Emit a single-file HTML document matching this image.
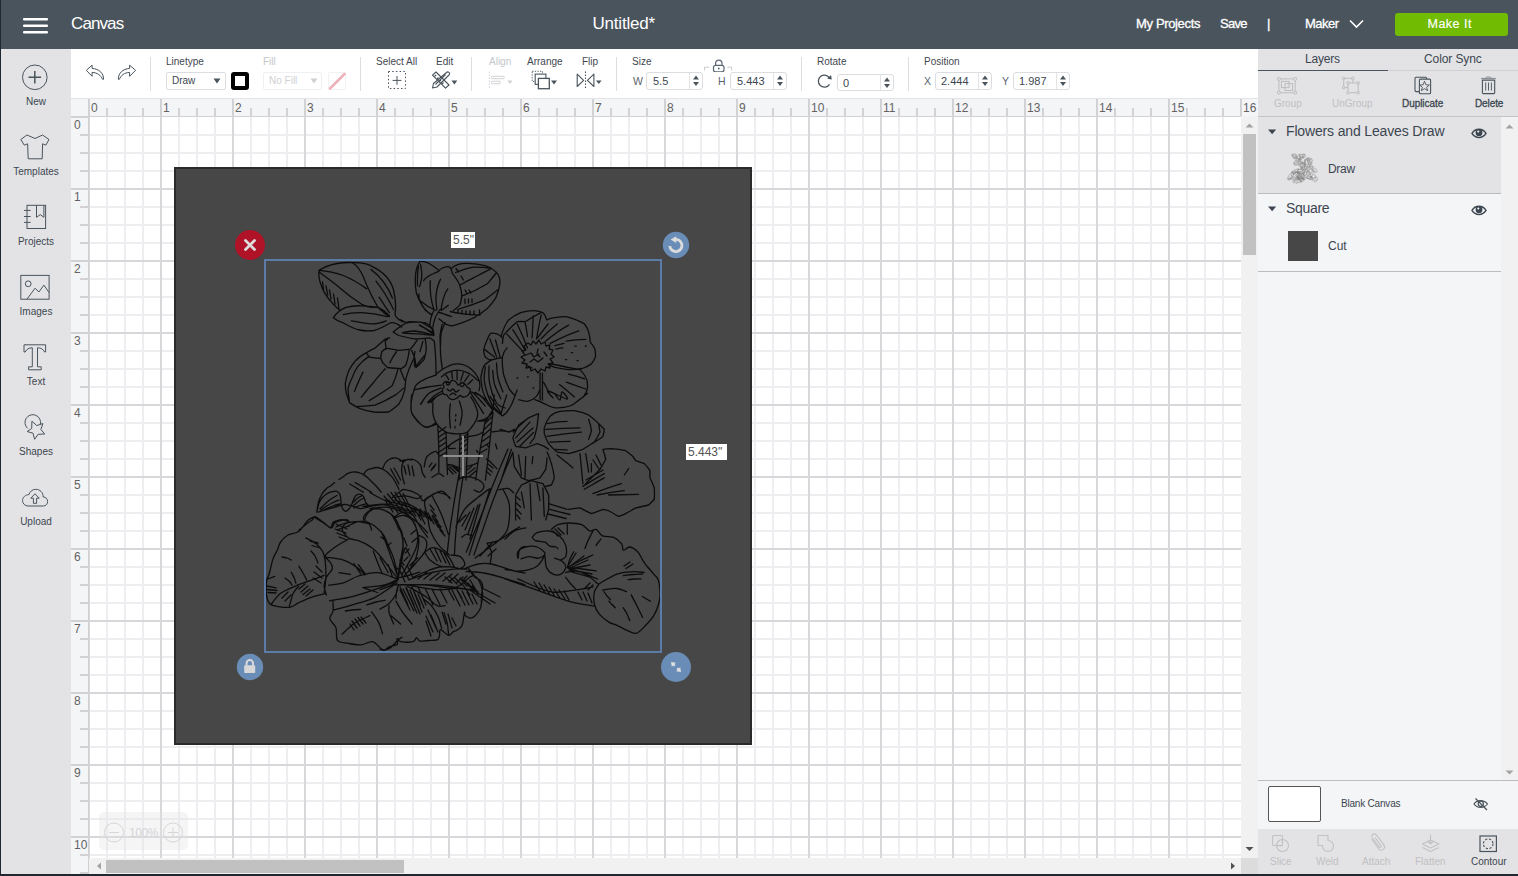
<!DOCTYPE html>
<html><head><meta charset="utf-8">
<style>
*{box-sizing:border-box;margin:0;padding:0}
html,body{width:1518px;height:876px;overflow:hidden;background:#fff;font-family:"Liberation Sans",sans-serif;position:relative}
.abs{position:absolute}
.t{position:absolute;white-space:nowrap;line-height:1}
#hdr{position:absolute;left:0;top:0;width:1518px;height:49px;background:#4a545c}
.ht{position:absolute;color:#fff;white-space:nowrap;line-height:1}
#side{position:absolute;left:1px;top:49px;width:70px;height:825px;background:#e3e3e5}
.sl{position:absolute;left:0;width:70px;text-align:center;font-size:10px;color:#3c4650;line-height:1}
.lbl{position:absolute;font-size:10px;color:#3f4750;white-space:nowrap;line-height:1}
.dis{color:#c3c7cb}
.sep{position:absolute;top:57px;width:1px;height:34px;background:#dedee0}
.inp{position:absolute;height:17px;border:1px solid #dcdde0;border-radius:3px;background:#fff}
.iv{position:absolute;font-size:11px;color:#3c4650;line-height:1;white-space:nowrap}
#canvas{position:absolute;left:71px;top:99px;width:1170px;height:759px;overflow:hidden}
.pt{position:absolute;color:#3c4650;white-space:nowrap;line-height:1}
</style></head><body>
<!-- HEADER -->
<div id="hdr">
  <svg class="abs" style="left:23px;top:17px" width="26" height="18"><g fill="#fff"><rect x="0" y="1" width="25" height="2.4" rx="1"/><rect x="0" y="7.5" width="25" height="2.4" rx="1"/><rect x="0" y="14" width="25" height="2.4" rx="1"/></g></svg>
  <div class="ht" style="left:71px;top:14.5px;font-size:17px;letter-spacing:-0.9px">Canvas</div>
  <div class="ht" style="left:592.5px;top:14.5px;font-size:17px;letter-spacing:-0.2px">Untitled*</div>
  <div class="ht" style="left:1136px;top:17px;font-size:13px;letter-spacing:-0.35px;-webkit-text-stroke:0.3px #fff">My Projects</div>
  <div class="ht" style="left:1220px;top:17px;font-size:13px;letter-spacing:-0.7px;-webkit-text-stroke:0.3px #fff">Save</div>
  <div class="ht" style="left:1267px;top:17px;font-size:13px;-webkit-text-stroke:0.35px #fff">|</div>
  <div class="ht" style="left:1305px;top:17px;font-size:13px;letter-spacing:-0.5px;-webkit-text-stroke:0.3px #fff">Maker</div>
  <svg class="abs" style="left:1349px;top:19px" width="15" height="10"><path d="M1 1.5L7.5 8L14 1.5" stroke="#fff" stroke-width="1.6" fill="none"/></svg>
  <div class="abs" style="left:1395px;top:13px;width:113px;height:23px;background:#71bb02;border-radius:3px"></div>
  <div class="ht" style="left:1427.5px;top:17.8px;font-size:12.5px;letter-spacing:0.5px;-webkit-text-stroke:0.15px #fff">Make It</div>
</div>
<div class="abs" style="left:0;top:0;width:1px;height:876px;background:#1f2730"></div>
<div class="abs" style="left:0;top:874px;width:1518px;height:2px;background:#1f2730"></div>

  <!-- LEFT SIDEBAR -->
  <div id="side">
    <svg class="abs" style="left:-1px;top:-49px" width="71" height="600" fill="none" stroke="#4a545c" stroke-width="1">
      <circle cx="34.8" cy="77.3" r="12.3"/>
      <path d="M34.8 71V83.6M28.5 77.3H41.1" stroke-width="1.5"/>
      <path d="M27 135L35 138.5L42.5 135L49 139.5L45.8 145.2L42.6 143.8L42.2 158.8H28.2L27.6 143.8L24.3 145.2L20.8 139.5Z" stroke-linejoin="round"/>
      <rect x="27" y="205.3" width="18.6" height="23.2"/>
      <path d="M36.5 205.3V217.3L40.2 214.6L43.9 217.3V205.3"/>
      <path d="M24 210.4H30.6M24 216.5H30.6M24 222.4H30.6"/>
      <rect x="20.8" y="275.4" width="28.3" height="23.8"/>
      <circle cx="28.2" cy="283.8" r="2.9"/>
      <path d="M26.9 299.2L35.1 288.2L38.9 292L43.9 285.1L49.1 292.6"/>
      <path d="M24 344.8H45.6V352L44.6 352C43 349 41 347.8 37.5 347.8V366.8H41.2V369.8H28.6V366.8H32.3V347.8C28.8 347.8 26.8 349 25.2 352L24 352Z" stroke-linejoin="round"/>
      <path d="M27.6 428.3A7.8 7.8 0 1 1 40.4 424.2"/>
      <path d="M31.9 421.2L36.8 425.6L42.9 423.5L40.9 429.5L44.7 434L38.1 434.3L34.6 439.3L33 433.2L27.1 431.5L31.7 428.5Z" stroke-linejoin="round"/>
      <path d="M28 506H43.5C46 506 47.6 504 47.6 501.5C47.6 498.8 45.6 497 43.2 497C43.2 492.5 40 489.3 35.8 489.3C32.3 489.3 29.8 491.6 29 494.6C25.5 494.6 22.5 497.3 22.5 500.5C22.5 503.5 25 506 28 506Z"/>
      <path d="M35 493.8L30.8 498.2H33.4V503.3H36.6V498.2H39.2Z" stroke-linejoin="round"/>
    </svg>
    <div class="sl" style="top:48px">New</div>
    <div class="sl" style="top:118px">Templates</div>
    <div class="sl" style="top:188px">Projects</div>
    <div class="sl" style="top:258px">Images</div>
    <div class="sl" style="top:328px">Text</div>
    <div class="sl" style="top:398px">Shapes</div>
    <div class="sl" style="top:468px">Upload</div>
  </div>


<!-- TOOLBAR -->
<div class="abs" style="left:71px;top:49px;width:1187px;height:50px;background:#fff"></div>
<div class="abs" style="left:71px;top:98px;width:1187px;height:1px;background:#e4e4e6"></div>
<svg class="abs" style="left:80px;top:60px" width="62" height="24" fill="none" stroke="#4a545c" stroke-width="1" stroke-linejoin="round">
  <path d="M6.3 10.3L12.1 5.2V8.4C19 9 23.6 13 23.6 19.3C23.3 19.6 22.7 19.6 22.4 19.2C21 15.5 17.5 12.6 12.1 12.4V16.3Z"/>
  <path d="M55.6 10.3L49.6 5.2V8.4C42.8 9 38.3 13 38.3 19.3C38.6 19.6 39.2 19.6 39.5 19.2C40.9 15.5 44.3 12.6 49.6 12.4V16.3Z"/>
</svg>
<div class="sep" style="left:150px"></div>
<div class="lbl" style="left:166px;top:57px">Linetype</div>
<div class="inp" style="left:166px;top:72px;width:60px;height:18px;border-radius:2px"></div>
<div class="iv" style="left:172px;top:76px;font-size:10px">Draw</div>
<svg class="abs" style="left:213px;top:78px" width="8" height="6"><path d="M0.5 0.5H7.5L4 5.5Z" fill="#4a545c"/></svg>
<div class="abs" style="left:231px;top:72px;width:18px;height:18px;border:4px solid #000;border-radius:3px;background:#fff"></div>
<div class="lbl dis" style="left:263px;top:57px">Fill</div>
<div class="inp" style="left:263px;top:72px;width:59px;height:18px;border-color:#f0f0f2;border-radius:2px"></div>
<div class="iv" style="left:269px;top:76px;font-size:10px;color:#cfd1d4">No Fill</div>
<svg class="abs" style="left:310px;top:78px" width="8" height="6"><path d="M0.5 0.5H7.5L4 5.5Z" fill="#cfd1d4"/></svg>
<div class="inp" style="left:328px;top:72px;width:18px;height:18px;border-color:#f2f2f4;border-radius:2px"></div>
<svg class="abs" style="left:328px;top:72px" width="18" height="18"><path d="M2 16.5L16.5 2" stroke="#efb2ba" stroke-width="2.6" stroke-linecap="round"/></svg>
<div class="sep" style="left:360px"></div>
<div class="lbl" style="left:376px;top:57px">Select All</div>
<svg class="abs" style="left:386px;top:70px" width="22" height="21" fill="none" stroke="#4a545c">
  <rect x="2.5" y="1.5" width="17" height="17" stroke-dasharray="1.5 2.2" stroke-width="1"/>
  <path d="M11 6V14.8M6.6 10.4H15.4" stroke-width="1"/>
</svg>
<div class="lbl" style="left:436px;top:57px">Edit</div>
<svg class="abs" style="left:430px;top:70px" width="30" height="20" fill="none" stroke="#4a545c" stroke-width="1.1" stroke-linejoin="round">
  <path d="M2.5 5.2L6 2L19 15L15.5 18.2Z"/>
  <path d="M4.5 6.5L6.2 4.8M7 9L8.5 7.5M9.5 11.5L11 10M12 14L13.5 12.5"/>
  <path d="M16.5 2.5C17.5 1.5 19 1.8 19.5 3C19.8 3.8 19.5 4.5 19 5L7 17L2.5 18L3.5 13.5Z"/>
  <path d="M5.5 14.5L15.5 4.5"/>
  <path d="M21.5 10.5H27.3L24.4 14.4Z" fill="#4a545c" stroke="none"/>
</svg>
<div class="sep" style="left:471px"></div>
<div class="lbl dis" style="left:489px;top:57px">Align</div>
<svg class="abs" style="left:486px;top:70px" width="30" height="20" fill="none" stroke="#cfd1d4" stroke-width="1">
  <path d="M3.4 1.5V18.7" stroke-dasharray="1.5 1.5"/>
  <rect x="5.6" y="6.3" width="12.4" height="2.4" rx="0.5"/>
  <rect x="5.6" y="11.2" width="8.5" height="2.6" rx="0.5"/>
  <path d="M21.4 10.6H26.5L24 14Z" fill="#cfd1d4" stroke="none"/>
</svg>
<div class="lbl" style="left:527px;top:57px">Arrange</div>
<svg class="abs" style="left:530px;top:70px" width="30" height="20" fill="none" stroke="#4a545c" stroke-width="1.1">
  <rect x="2.2" y="1.3" width="10.3" height="10.1" stroke-dasharray="1.3 1.3" stroke-width="0.9"/>
  <rect x="5.2" y="4.1" width="10.7" height="10.3" fill="#fff"/>
  <rect x="8.4" y="8.4" width="10.9" height="10.3" fill="#fff" stroke-width="1.3"/>
  <path d="M21 10.4H27L24 14.4Z" fill="#4a545c" stroke="none"/>
</svg>
<div class="lbl" style="left:582px;top:57px">Flip</div>
<svg class="abs" style="left:575px;top:70px" width="30" height="20" fill="none" stroke="#4a545c" stroke-width="1.1" stroke-linejoin="round">
  <path d="M2.2 4.1L8.6 10.3L2.2 16.5Z"/>
  <path d="M10.5 1.5V18.7" stroke-dasharray="1.6 1.4"/>
  <path d="M18.9 4.1L12.4 10.3L18.9 16.5Z"/>
  <path d="M21 10.4H26.6L23.8 14Z" fill="#4a545c" stroke="none"/>
</svg>
<div class="sep" style="left:616px"></div>
<div class="lbl" style="left:632px;top:57px">Size</div>
<div class="lbl" style="left:633px;top:76px;color:#5a6470;font-size:10.5px">W</div>
<div class="inp" style="left:646px;top:72px;width:57px;height:18px"></div>
<div class="abs" style="left:689px;top:73px;width:1px;height:16px;background:#e4e4e6"></div>
<div class="iv" style="left:653px;top:76px">5.5</div>
<svg class="abs" style="left:692px;top:74px" width="8" height="14"><path d="M1 5.4L4 1.5L7 5.4ZM1 8L4 12L7 8Z" fill="#4a545c"/></svg>
<svg class="abs" style="left:703px;top:58px" width="30" height="14" fill="none" stroke="#5a6470" stroke-width="1">
  <path d="M1.5 12.5V9.2H6.3M24.3 9.2H28.6V12.5" stroke="#c8ccd0"/>
  <rect x="10.5" y="7.3" width="10.5" height="6.5" rx="2" stroke-width="1.2"/>
  <path d="M12.6 7.3V5.3A3.2 3.2 0 0 1 19 5.3V7.3" stroke-width="1.2"/>
  <circle cx="15.8" cy="10.5" r="0.9" fill="#5a6470" stroke="none"/>
</svg>
<div class="lbl" style="left:718px;top:76px;color:#5a6470;font-size:10.5px">H</div>
<div class="inp" style="left:730px;top:72px;width:57px;height:18px"></div>
<div class="abs" style="left:773px;top:73px;width:1px;height:16px;background:#e4e4e6"></div>
<div class="iv" style="left:737px;top:76px">5.443</div>
<svg class="abs" style="left:776px;top:74px" width="8" height="14"><path d="M1 5.4L4 1.5L7 5.4ZM1 8L4 12L7 8Z" fill="#4a545c"/></svg>
<div class="sep" style="left:801px"></div>
<div class="lbl" style="left:817px;top:57px">Rotate</div>
<svg class="abs" style="left:815px;top:73px" width="20" height="16" fill="none" stroke="#4a545c" stroke-width="1.3">
  <path d="M14.8 5.6A6 6 0 1 0 14.5 11.3"/>
  <path d="M12.2 5.8L16.8 6.4L16 2" fill="#4a545c" stroke="none"/>
</svg>
<div class="inp" style="left:837px;top:74px;width:57px;height:17px"></div>
<div class="abs" style="left:880px;top:75px;width:1px;height:15px;background:#e4e4e6"></div>
<div class="iv" style="left:843px;top:78px">0</div>
<svg class="abs" style="left:883px;top:76px" width="8" height="14"><path d="M1 5.4L4 1.5L7 5.4ZM1 8L4 12L7 8Z" fill="#4a545c"/></svg>
<div class="sep" style="left:908px"></div>
<div class="lbl" style="left:924px;top:57px">Position</div>
<div class="lbl" style="left:924px;top:76px;color:#5a6470;font-size:10.5px">X</div>
<div class="inp" style="left:935px;top:72px;width:57px;height:18px"></div>
<div class="abs" style="left:978px;top:73px;width:1px;height:16px;background:#e4e4e6"></div>
<div class="iv" style="left:941px;top:76px">2.444</div>
<svg class="abs" style="left:981px;top:74px" width="8" height="14"><path d="M1 5.4L4 1.5L7 5.4ZM1 8L4 12L7 8Z" fill="#4a545c"/></svg>
<div class="lbl" style="left:1002px;top:76px;color:#5a6470;font-size:10.5px">Y</div>
<div class="inp" style="left:1013px;top:72px;width:57px;height:18px"></div>
<div class="abs" style="left:1056px;top:73px;width:1px;height:16px;background:#e4e4e6"></div>
<div class="iv" style="left:1019px;top:76px">1.987</div>
<svg class="abs" style="left:1059px;top:74px" width="8" height="14"><path d="M1 5.4L4 1.5L7 5.4ZM1 8L4 12L7 8Z" fill="#4a545c"/></svg>

<!-- CANVAS -->
<div>
<svg class="abs" style="left:71px;top:99px" width="1187" height="775" shape-rendering="crispEdges" font-family="Liberation Sans">
<rect x="0" y="0" width="1187" height="775" fill="#fff"/>
<path d="M36 18V759M54 18V759M72 18V759M108 18V759M126 18V759M144 18V759M180 18V759M198 18V759M216 18V759M252 18V759M270 18V759M288 18V759M324 18V759M342 18V759M360 18V759M396 18V759M414 18V759M432 18V759M468 18V759M486 18V759M504 18V759M540 18V759M558 18V759M576 18V759M612 18V759M630 18V759M648 18V759M684 18V759M702 18V759M720 18V759M756 18V759M774 18V759M792 18V759M828 18V759M846 18V759M864 18V759M900 18V759M918 18V759M936 18V759M972 18V759M990 18V759M1008 18V759M1044 18V759M1062 18V759M1080 18V759M1116 18V759M1134 18V759M1152 18V759M18 36H1170M18 54H1170M18 72H1170M18 108H1170M18 126H1170M18 144H1170M18 180H1170M18 198H1170M18 216H1170M18 252H1170M18 270H1170M18 288H1170M18 324H1170M18 342H1170M18 360H1170M18 396H1170M18 414H1170M18 432H1170M18 468H1170M18 486H1170M18 504H1170M18 540H1170M18 558H1170M18 576H1170M18 612H1170M18 630H1170M18 648H1170M18 684H1170M18 702H1170M18 720H1170M18 756H1170" stroke="#eeeef0" stroke-width="2" fill="none"/>
<path d="M18 18V759M90 18V759M162 18V759M234 18V759M306 18V759M378 18V759M450 18V759M522 18V759M594 18V759M666 18V759M738 18V759M810 18V759M882 18V759M954 18V759M1026 18V759M1098 18V759M18 90H1170M18 162H1170M18 234H1170M18 306H1170M18 378H1170M18 450H1170M18 522H1170M18 594H1170M18 666H1170M18 738H1170" stroke="#d8d8da" stroke-width="2" fill="none"/>
<rect x="0" y="0" width="1187" height="17" fill="#f4f5f7"/>
<rect x="0" y="0" width="17" height="775" fill="#f4f5f7"/>
<path d="M18 0V18M90 0V18M162 0V18M234 0V18M306 0V18M378 0V18M450 0V18M522 0V18M594 0V18M666 0V18M738 0V18M810 0V18M882 0V18M954 0V18M1026 0V18M1098 0V18M1170 0V18M36 9V18M54 9V18M72 9V18M108 9V18M126 9V18M144 9V18M180 9V18M198 9V18M216 9V18M252 9V18M270 9V18M288 9V18M324 9V18M342 9V18M360 9V18M396 9V18M414 9V18M432 9V18M468 9V18M486 9V18M504 9V18M540 9V18M558 9V18M576 9V18M612 9V18M630 9V18M648 9V18M684 9V18M702 9V18M720 9V18M756 9V18M774 9V18M792 9V18M828 9V18M846 9V18M864 9V18M900 9V18M918 9V18M936 9V18M972 9V18M990 9V18M1008 9V18M1044 9V18M1062 9V18M1080 9V18M1116 9V18M1134 9V18M1152 9V18M0 18H18M0 90H18M0 162H18M0 234H18M0 306H18M0 378H18M0 450H18M0 522H18M0 594H18M0 666H18M0 738H18M9 36H18M9 54H18M9 72H18M9 108H18M9 126H18M9 144H18M9 180H18M9 198H18M9 216H18M9 252H18M9 270H18M9 288H18M9 324H18M9 342H18M9 360H18M9 396H18M9 414H18M9 432H18M9 468H18M9 486H18M9 504H18M9 540H18M9 558H18M9 576H18M9 612H18M9 630H18M9 648H18M9 684H18M9 702H18M9 720H18M9 756H18M9 774H18" stroke="#d2d2d4" stroke-width="1.5" fill="none"/>
<rect x="17" y="16.799999999999997" width="1170" height="1.3" fill="#d2d2d4"/>
<rect x="16.5" y="16" width="1.5" height="759" fill="#d0d0d2"/>
<text x="20" y="13" font-size="12" fill="#636363">0</text>
<text x="92" y="13" font-size="12" fill="#636363">1</text>
<text x="164" y="13" font-size="12" fill="#636363">2</text>
<text x="236" y="13" font-size="12" fill="#636363">3</text>
<text x="308" y="13" font-size="12" fill="#636363">4</text>
<text x="380" y="13" font-size="12" fill="#636363">5</text>
<text x="452" y="13" font-size="12" fill="#636363">6</text>
<text x="524" y="13" font-size="12" fill="#636363">7</text>
<text x="596" y="13" font-size="12" fill="#636363">8</text>
<text x="668" y="13" font-size="12" fill="#636363">9</text>
<text x="740" y="13" font-size="12" fill="#636363">10</text>
<text x="812" y="13" font-size="12" fill="#636363">11</text>
<text x="884" y="13" font-size="12" fill="#636363">12</text>
<text x="956" y="13" font-size="12" fill="#636363">13</text>
<text x="1028" y="13" font-size="12" fill="#636363">14</text>
<text x="1100" y="13" font-size="12" fill="#636363">15</text>
<text x="1172" y="13" font-size="12" fill="#636363">16</text>
<text x="3" y="30" font-size="12" fill="#636363">0</text>
<text x="3" y="102" font-size="12" fill="#636363">1</text>
<text x="3" y="174" font-size="12" fill="#636363">2</text>
<text x="3" y="246" font-size="12" fill="#636363">3</text>
<text x="3" y="318" font-size="12" fill="#636363">4</text>
<text x="3" y="390" font-size="12" fill="#636363">5</text>
<text x="3" y="462" font-size="12" fill="#636363">6</text>
<text x="3" y="534" font-size="12" fill="#636363">7</text>
<text x="3" y="606" font-size="12" fill="#636363">8</text>
<text x="3" y="678" font-size="12" fill="#636363">9</text>
<text x="3" y="750" font-size="12" fill="#636363">10</text>
</svg>
<div class="abs" style="left:1241px;top:116px;width:17px;height:742px;background:#f1f1f1"></div>
<div class="abs" style="left:1243px;top:134px;width:13px;height:121px;background:#c1c1c1"></div>
<svg class="abs" style="left:1241px;top:116px" width="17" height="742"><path d="M4.5 11.5H12.5L8.5 7.5Z" fill="#a3a3a3"/><path d="M4.5 731H12.5L8.5 735Z" fill="#505050"/></svg>
<div class="abs" style="left:89px;top:858px;width:1152px;height:16px;background:#f1f1f1"></div>
<div class="abs" style="left:106px;top:860px;width:298px;height:13px;background:#c1c1c1"></div>
<svg class="abs" style="left:89px;top:858px" width="1152" height="16"><path d="M12 4.5V11.5L8 8Z" fill="#a3a3a3"/><path d="M1142 4.5V11.5L1146 8Z" fill="#505050"/></svg>
<div class="abs" style="left:1241px;top:858px;width:17px;height:16px;background:#dcdcdc"></div>
</div>
<!-- OVERLAY: square + selection -->
<div class="abs" style="left:174px;top:167px;width:578px;height:578px;background:#474747;border:2px solid #2a2a2a"></div>
<svg class="abs" style="left:0;top:0" width="1518" height="876">
<path d="M319 270.4C330 263 345 262 353.4 262.7C362 262.5 368 264 371.9 266.3C384 272 391 280 393.5 290C396 300 396 308 395 314.6C396 318 399 320 402.8 321.8M319 270.4C318.5 276 319 280 320.6 283.8C323 291 326 296 329.8 300.2C333 304 336 307.5 340.1 310.5M319 272C326 277 333 282 341.1 288.9C348 295 355 300 361.7 304.3C367 307 372 307.5 377 307.4M319 270.4C327 271 335 272.5 343.2 275.5C352 279 360 284 366.8 288.9M352.4 262.7C358 266 361 271 363.7 277.6C366 284 369 290 371.9 296.1C374 300 376 304 378.1 307.4C382 311 385 314 389.4 316.6M370.9 269.4C380 276 388 287 392.5 298.2M376 281.2C383 290 389 300 393.5 309.5M379.1 297.1C383 303 386 308 389.4 312.6M322.5 282L323.6 290M326 286L327.7 295M329.5 290L331 299M333.5 294L335 304M337.5 298L339 309M333.4 317.7C337 312 342 309 346.2 307.4C351 306 356 305.5 361.7 305.9C367 306 373 306.5 378.1 307.4C382 309 386 312 389.4 315.6M333.4 317.7C336 320 340 322 343.2 322.8C349 326 354 329 359.6 330C364 331 369 331 374 330.5C380 329 385 326 390.4 322.8C394 322 398 324 401.7 327M343.2 314.6C349 313 355 312.5 361.7 312.6C370 313 379 314.5 387.4 316.6M351.4 320.8C358 322 365 323.5 371.9 323.9C377 324 382 322.5 386.3 320.8M420 261.2C417 266 415.5 272 415.4 277.6C415 283 415.5 288 416.4 293C418 298 420 302 422.6 306.4C425 310 428 312.5 430.8 314.6M420 261.2C423 261.5 426 262 428.8 263.2C432 265 436 268 439 270.4C441 268.5 444 267 446.2 266.8C448 266.5 449.5 267 450.3 267.8C451.5 269.5 452 271.5 452.4 273.5C455 277 458 281 459.6 284.8C461 289 462 293 461.7 296.1C461.5 300 460.8 303 459.6 305.4C457.5 307.5 455.5 309 453.4 310.5M420.5 264.2C421.5 269 422 274 421.6 278.6C421 282 420.3 284.5 419.5 286.9M418.5 266.3C417.5 272 417.2 279 417.5 285.8M423.6 280.7C426 277 430 275 433.9 273.5C435.5 272.5 437 272 439 271.4M419 294C418.8 296 419 298 419.5 300.2C421 303.5 423 307 425.7 310.5C427.5 312 429.5 313.5 431.9 314.6M430.3 280.7C430 286 430.2 291 430.8 296.1C431.5 301 432.5 305.5 433.9 309.5M440.6 279.1C438 284 436.5 290 436 296.1C435.8 301 436.2 305.5 437 309.5M447.8 288.9C445.5 292 444 295.5 443.2 299.2C442.2 303 441.5 306 441.1 309.5M419.5 300.2C424 304 430 308 436 310.5M448.3 305.4C446 307 443.5 309 441.1 310.5M439 312.5C443 313.5 447 315 451.4 316.6M451.4 268.4C454 266 457.5 264.5 461.7 263.7C466 263 472 263.5 477.1 264.2C482 265 486.5 266 490.4 267.8C494 270 497 272.5 498.6 275.5C500 279 500.3 282 499.7 284.8C499 289.5 497.5 294 495.6 298.2C493 302 490.5 305.5 487.3 308.4C483 312 478.5 315 474 317.7C470 319.5 466 321.5 461.7 322.8C458 324 454.5 325.5 451.4 325.9C449 325.5 447 324.8 445.2 323.9C443 322.5 441 320.5 439 318.7M491.4 268.4C485 267.5 478.5 267 471.9 267.3C466 268.5 460.5 270.5 455.5 272.5M491.4 268.4C486 271.5 480 274.5 474 277.6C469 280 464.5 282.5 460.6 284.8M496.6 272.5C494 276 490.5 280 487.3 283.8C479 289 470.5 293 461.7 296.1M497.6 290C493 293.5 488.5 297 484.3 300.2C475 304 466 307 457.5 309.5M450.3 311.5C454 312.5 458 313.2 461.7 313.6C468 314.3 474 314.8 480.1 315.1M456 268.5L458.5 272M461 276L463.5 280M465 290L467 293.5M469 290L471 293M465 299V303.5M468.5 299V303M472 299V302.5M458 310V313M462 310.5V314M466 311V314.5M470 311V315M474 311V314.5M479.5 310V313.5M433.9 310.5C432.5 313 431.5 316 430.8 318.7C430.3 320.5 430 322.5 429.8 324.9M440.1 309.5C438 312.5 436 315.5 434.9 318.7C434 321 433.3 324 432.9 326.9M445.2 322.8C443.5 326 442 329.5 441.1 333.1C440.7 337 440.5 341 440.6 345M400 319.7C402.5 321 405 322.2 407.2 322.8C409.5 322.5 411.5 322 413.4 321.8C417.5 321.8 421.5 322 425.7 322.8C428.5 324.5 431 326.5 432.9 329C433.5 331 433.8 333 433.9 335.1M419.5 324.9C424 327.5 429 331 432.9 334.1M403.1 333.1C413 333.5 422 334 431.9 335.1M501.3 335.4C503 330 505 325 508.1 320.5C512 317 516 314.5 520.7 312.6C526 311 531 310.5 536.6 310.8C539 311 541.5 312 543.5 313.1C545 315 546 317.5 546.9 320M502.4 343.4C502.5 340.5 503 338 503.5 335.4C508 330 512.5 325.5 517.2 321.7C520 321.3 522.5 321.5 525.2 321.7C530 318.5 535 315.5 540.1 313.1M507 334.2C512 340 518 346 523 351.4M512.7 329.7C517 336 521 343 525.2 350.2M517.2 324C521 332 524.5 340 527.5 348M525.2 322.8C526 327 527 332 527.5 336.5M533.2 316C533 323 532.5 330 532.1 337.7M541.2 314.8C539.5 322 538 330 536.6 338.8M546.9 320C549.5 318.5 552 318 554.9 317.7C558.5 317 562.5 316.5 566.3 316.6C570 317.5 574 318.8 577.7 320.5C580 321.5 582.5 322.5 584.6 324C587 327 588.5 330.5 589.2 334.2C589.8 337 590 339.5 590.3 342.2C592 344.5 594 346.5 594.9 349.1C595.5 352 595.6 354.5 595.4 357.1C594.5 359.5 593 362 591.4 363.9C588.5 366 585.5 367.5 582.3 368.5C578 369.3 573 369.7 568.6 369.6C564 369.2 559.5 368.5 554.9 367.4C552.5 366.5 550 365.3 548.1 363.9M537.8 337.7C541 333 544.5 328.5 548.1 324M541.2 338.8C546 333.5 551.5 328.5 557.2 324M545.8 341.1C553 335 560.5 329.5 568.6 325.1M550.3 343.4C559.5 338.5 569 334 578.9 330.8M554.9 345.7C558 344.8 561 344 564 343.4M566.3 341.1C572.5 340 579 339.5 585.7 339.4M556 349.1C558.3 348.5 560.5 348.2 562.9 347.9M575 346.2h1.2M585.2 346.2h1.2M571.5 352.7h1.2M565.5 359.6h1.2M577 360.7h1.2M517 378h0.8M527.5 377h0.8M533 388h0.8M528 343L531 345L533 341L536 344L539 340L541 344L545 342L546 346L550 345L549 349L553 350L551 354L554 357L550 359L553 363L549 364L550 368L546 367L545 371L541 369L538 373L535 369L531 371L530 367L526 368L527 364L522 363L525 360L521 357L525 355L522 351L526 350L524 346ZM526 355L531 353L534 357L539 354M530 362L534 359L538 362L543 358M538 349L537 354L540 357M544 352L547 356M528 366L532 368M507 347.9C504.5 350.5 503 353.5 502.4 357.1C502 363 502.5 368.5 503.5 374.2C505 379.5 507 384.5 509.2 389C511 391.5 513 393.8 515 395.9M548.1 363.9C551 364 554 364.5 557 365C565 367 573 368.5 580 369.6C583 372.5 585.5 376 586.9 379.9C587.5 383 587.6 386 587.4 389C586.5 392 585 394.5 583.4 397M568.6 374.2C574 375.5 579.5 377 584.6 378.8M566.3 382.2C572.5 384.5 579 386.8 585.7 389M559.5 384.5C564.5 388.5 569.5 392.5 574.3 397M543.5 382.2C545.5 385.5 547.5 389.5 549.2 393.6M540.1 373.1C540 382 540 391 540.1 400M542.4 373.1C542.5 382 542.5 391 542.4 400M483.6 350.2C484.5 346 485.8 342.5 487.6 338.8C488.5 336.5 489.5 334.5 491 333.1C493.5 333 495.8 333.5 497.8 334.2C499.5 335.3 501 336.5 502.4 337.7M483.6 350.2C483.8 352.5 484.3 355 485.3 357.1C486.8 358.5 488.3 359.4 489.8 359.9C493 359.7 496 359 499 358.2M489.8 338.8C492 345 494.5 351 496.7 357.1M495.5 340C497 345.5 498.5 351 500.1 357.1M484.1 349.1C487.5 351.5 491 354.5 494.4 357.1M366.4 352.7C362 355 358.5 357.5 355.5 360.7C352.5 364 350.5 367.5 348.7 370.9C347 375 346 379 345.3 383.5C345.3 387 345.7 390.5 346.4 393.8C347.5 397 348.5 400 349.8 402.9C353 405 356.5 407 360.1 408.6C364.5 410.3 369 411.3 373.8 412C378.5 412.3 383.5 412.3 388.7 412C392.5 409.5 396 407 398.9 404C401.5 400 403.5 395 404.6 390.3C405.3 386.5 405.6 382.5 405.8 378.9C406.8 375.5 408 372 409.2 368.7C410.7 365 412.5 361.5 413.8 358.4C414.3 356 414.7 353.5 414.9 351.5M369.2 356.1C365 359 361 362.5 357.8 366.4C355.3 370 353.5 374 352.1 377.8C350.5 381 349 384.5 348.1 388.1C348 392.5 348.5 396.5 349.3 400.6M357.8 406.3C363.5 406.5 369.5 406 375 405.2C382 402.5 389 399 395.5 394.9C398.5 392.5 401 390.5 403.5 388.1M363 372.1C360 378 357 385 354.4 391.5M385.2 368.7C381 373.5 376.5 378.5 372.7 383.5C368.5 388 365 392.5 361.3 397.2M397.8 369.8C396.5 375 394.5 380.5 392.1 385.8C385 391 377 396 369.2 400.6M400.1 368.7C401.5 372.5 403 376.5 404.6 380.1M366.4 352.7C367.5 354.5 368.3 356 369.2 357.2C373 357.8 377 358.2 380.7 358.4C381.5 360 382.2 361.5 382.9 363C384.5 364.5 386 366 387.5 367.5C392 368 396.5 368.5 401.2 368.7C402.8 367.8 404.5 366.5 405.8 365.2C406.8 362.5 407.5 360 408.1 357.2C408.5 355 408.9 352.5 409.2 350.4M366.4 352.7C369 351 372 349.5 375 348.1C378.5 345 382 342 385.2 339C386.8 338.5 388.3 338 389.8 337.8M380.7 358.4C381 356 381.3 353.5 381.8 351.5C383.2 350.3 384.8 349.2 386.4 348.1C390.5 349 394.5 349.8 398.9 350.4C402.5 350.2 406.5 349.8 410.3 349.2C412.8 346.5 415 343.5 417.2 340.1M386.4 349.2C385.8 346.5 385.3 344 385.2 341.3C386 340.5 386.8 339.7 387.5 339M396.6 351.5C394 355 391.5 359 389.8 363M411.5 350.4C412.8 353 414 355.5 414.9 358.4C415.5 361.5 415.8 364.5 416 367.5C419 365 421.8 362 424 359.5C425.2 356 426 352.5 426.3 349.2C426.2 345.5 425.8 342 425.2 339M422.9 341.3C422 344.5 421 348 420 351.5M393.2 332.1C395 330.5 397 329 398.9 327.6C402 325.5 405 323.5 408.1 321.8C412.5 321.5 417 321.8 421.8 322.4C425 324.5 429 326.5 432 328.7C432.6 331 433 333 433.2 335.5M393.2 332.1C395 333.5 397 334.5 398.9 335.5C404 337 409.5 338 414.9 339C420 338.8 425 338.3 429.7 337.8C431.3 338.8 433 340 434.3 341.3M402.4 332.7C406.5 331.8 410.5 331.2 414.9 331C421 331.8 427 333.2 433.2 335M419.5 325.3C424 327.5 428 329.8 432 332.1M434.3 341.3C434.8 346 435.2 350.5 435.5 355C435.8 361.5 436 368 436 374.4M442.3 324.1C441.2 327.8 440.5 331.5 440 335.5C440.2 342 440.4 348.5 440.6 355C441 359.5 441.7 364 442.3 368.7M544.3 427.8C545.5 423.5 547.5 419.5 550 416.4C553 413.5 556.5 412 560 411.4C565 410.8 569.5 410.5 574.3 410.7C579.5 411.8 584.5 413 588.6 415C591.5 417.2 594.5 419.5 597.1 422.1C599.5 424.5 602 427 604.3 429.3C604 431.8 603.6 434 602.9 436.4C600.3 438.5 597.3 440.3 594.3 442.1C590.5 444.5 586.8 447 582.9 449.3C578 451 573.3 452.5 568.6 453.6C564.8 453.2 561 452.7 557.1 452.1C554 449.5 551 446.5 548.6 443.6C546.8 440.5 545.3 437 544.3 433.6C544.2 431.5 544.2 429.5 544.3 427.8M588.6 419.3C590 423 591 427 591.4 430.7C590.8 433.5 589.8 436.5 588.6 439.3M598.6 423.6C599.2 426.5 599.7 429.3 600 432.1C598.5 435.5 596.5 439 594.3 442.1M547.1 423.6C553.5 422.3 560 421.5 567.1 421.4M545.7 429.3C557 428.5 568.5 428 580 427.9M547.1 436.4C558.5 434.5 570 433 581.4 432.1M550 442.1C556.5 441.8 563 441.5 570 441.4M554.3 449.3C558.5 449.5 562.8 449.8 567.1 450M602.9 449.3C605.8 448.8 608.5 448.6 611.4 448.6C616 449 621 449.7 625.7 450.7C628.3 452.5 630.7 454.5 632.9 456.4C633.8 458 634.7 459.4 635.7 460.7C638.8 461.7 641.5 462.5 644.3 463.6C646.5 465.8 648.4 468.3 650 470.7C650 473 650 475.5 650 477.9C651.5 481.3 653 484.5 654.3 487.9C654.5 491.7 654.5 495.5 654.3 499.3C652.5 501.3 650.5 503.3 648.6 505C644.3 506 640 507 635.7 507.9C632.3 509.8 629 511.8 625.7 513.6C623.3 514.6 621 515.5 618.6 516.4C615.3 514.5 612 512.6 608.6 510.7C606.8 510.2 604.8 509.8 602.9 509.3C599 510.8 595.3 512.3 591.4 513.6C587.5 511.7 583.8 509.8 580 507.9C576.2 508.3 572.4 508.8 568.6 509.3M592.9 493.6C602 490 611.5 486.5 621.4 483.6M597.1 495C606 493.3 615 491.8 624.3 490.7M608.6 495C618.5 494.8 628.5 494.5 638.6 494.3M624.3 475C625.8 472.8 627.2 470.7 628.6 468.6M582.9 486.4C590 482 597 477.5 604.3 473.6M584.3 489.3C591 485.5 597.5 481.5 604.3 477.9M586 480C592 476.5 598 473 603 470M547.1 452.1C548.8 456 550.3 459.7 551.4 463.6C552.8 468.3 553.8 473 554.3 477.9C553.5 480.5 552.5 482.8 551.4 485C549.5 485.5 547.6 486 545.7 486.4M557.1 455C562.5 459 567.5 463.5 572.9 467.9M580 453.6C581 463.5 582 473.5 582.9 483.6M585.7 453.6C586.8 459.8 587.8 466 588.6 472.1M591.4 463.6V472.1M602.9 449.3C604 452.7 605 456 605.7 459.3C604 462.7 602 466 600 469.3C595.5 474 590.5 478.8 585.7 483.6M596 455L601 465M593 460L599 469M538.6 413.6C535.3 414.8 532 416.3 528.6 417.9C525.3 420.3 521.8 422.5 518.6 425C516.5 429.3 514.5 433.5 512.9 437.9C513.5 440.8 514.5 443.5 515.7 446.4C519 446.9 522.3 447.4 525.7 447.9C529.5 446.5 533.3 445 537.1 443.6C539.5 444.5 542 445.5 544.3 446.4C545.8 447.3 547.2 448.3 548.6 449.3M538.6 413.6C538 418 537.5 422 537.1 426.4C536.3 430.3 535.3 434 534.3 437.9C532.8 439.8 531.3 441.7 530 443.6M515.7 437.9C520.5 432.6 525.3 427.3 530 422.1M517.1 442.1C522.3 437.3 527.5 432.5 532.9 427.9M520 446C524.5 441.5 529 437 533.5 432.5M513 432C518 427 523 422.5 527 419M512.9 452.1C513.3 457 513.8 461.7 514.3 466.4C516.5 470.3 519 474 521.4 477.9C523.8 478.8 526.2 479.8 528.6 480.7C532.4 479.8 536.2 478.8 540 477.9C542 475 543.8 472.3 545.7 469.3C546.3 465.5 546.8 461.7 547.1 457.9M518.6 455C519.5 461.7 520.5 468.3 521.4 475M525.7 456.4C525.5 463.5 525.3 470.7 525 477.9M532.9 456.4C532.6 458.8 532.3 461.2 532.1 463.6M515.7 520C515.5 511.7 515.5 503.3 515.7 495C517.5 491.7 519.5 488.3 521.4 485C524.7 483.5 528 482 531.4 480.7C535.2 481.7 539 482.7 542.9 483.6C545 487.4 547 491.2 548.6 495C548.8 499.8 548.8 504.5 548.6 509.3C547.8 512.8 546.8 516.4 545.7 520M521.4 492.1C522.5 497.3 523.4 502.6 524.3 507.9M530 483.6C530.5 496 531 508 531.4 520M537.1 483.6C538.2 489.3 539.2 495 540 500.7M542.9 487.9C543.4 497.3 543.9 506.8 544.3 516.4M517 497L520 500M516.5 503L520.5 507M516.5 509L521 514M517 515L520 519M548.6 503.6C555 505.5 561 507.3 567.1 509.3M549 509C556 511 563 512.8 570 514.5M548 514C554 515.5 560 517 566 518.5M500 429.3C502.8 430.2 505.7 431 508.6 432.1C510.5 431.3 512.4 430.3 514.3 429.3M500 483.6C503.8 472 507.5 460.5 511.4 449.3M316.8 512.1C317.1 510.4 317.6 505.0 318.5 502.0C319.4 499.0 320.6 496.3 322.0 494.0C323.4 491.7 325.6 489.3 327.0 488.0C328.4 486.7 329.2 486.9 330.5 486.0C331.8 485.1 333.9 483.2 334.6 482.6M339.0 479.5C339.6 479.1 341.5 478.1 342.8 477.1C344.1 476.1 346.2 474.3 346.9 473.7M346.9 473.7C347.6 473.5 349.6 472.6 351.0 472.3C352.4 472.0 353.8 471.9 355.2 472.0C356.6 472.1 358.1 472.4 359.5 472.8C360.9 473.2 362.8 474.1 363.4 474.4M363.4 474.4C363.9 473.8 365.4 471.4 366.5 470.5C367.6 469.6 368.4 469.4 370.2 468.9C372.0 468.4 375.1 467.5 377.1 467.5C379.2 467.5 381.6 468.7 382.5 468.9M382.5 468.9C383.0 467.9 384.2 464.6 385.3 463.0C386.4 461.4 387.6 460.3 389.0 459.5C390.4 458.7 391.9 458.1 393.5 458.0C395.1 457.9 396.9 458.1 398.5 458.8C400.1 459.5 402.3 461.6 403.1 462.1M403.1 462.1C403.8 461.7 405.7 459.9 407.2 459.5C408.7 459.1 411.2 459.9 412.0 460.0M363.4 474.4C364.2 475.0 366.5 476.6 368.0 478.0C369.5 479.4 371.0 481.0 372.5 482.5C374.0 484.0 375.6 485.4 377.0 487.0C378.4 488.6 380.5 491.3 381.2 492.2M382.5 468.9C383.2 469.4 385.4 470.6 387.0 472.0C388.6 473.4 390.6 475.3 392.1 477.1C393.6 478.9 394.7 480.9 395.8 483.0C396.9 485.1 398.5 488.4 399.0 489.5M403.1 462.1C402.9 462.9 402.0 465.4 401.8 467.0C401.6 468.6 401.5 469.8 401.7 471.6C401.9 473.4 402.3 475.9 402.8 478.0C403.3 480.1 404.2 483.0 404.5 484.0M316.8 512.1C317.2 510.6 318.1 505.4 319.0 503.0C319.9 500.6 321.1 499.2 322.3 497.7C323.6 496.2 325.1 494.9 326.5 494.0C327.9 493.1 329.2 492.6 330.5 492.2C331.8 491.8 332.9 491.4 334.0 491.3C335.1 491.2 336.3 490.9 337.3 491.5C338.3 492.1 339.5 493.5 340.1 494.9C340.7 496.3 340.6 498.2 340.8 500.0C341.0 501.8 341.1 504.3 341.5 505.9C341.9 507.5 342.5 508.6 343.2 509.5C343.9 510.4 344.7 511.4 345.6 511.4C346.5 511.4 347.6 510.4 348.5 509.5C349.4 508.6 350.2 507.3 351.0 505.9C351.8 504.5 352.3 502.6 353.0 501.0C353.7 499.4 354.4 497.4 355.2 496.3C355.9 495.2 356.8 494.9 357.5 494.5C358.2 494.1 358.6 494.1 359.3 494.2C360.0 494.2 360.8 494.4 361.5 494.8C362.2 495.2 362.8 495.5 363.4 496.3C363.9 497.1 364.4 498.4 364.8 499.5C365.2 500.6 365.5 502.2 366.1 503.2C366.7 504.2 367.6 504.9 368.5 505.3C369.4 505.8 371.1 505.8 371.6 505.9M320.0 509.0C320.8 508.2 323.2 505.7 325.0 504.0C326.8 502.3 329.0 500.4 331.0 499.0C333.0 497.6 336.0 496.1 337.0 495.5M321.0 510.0C321.8 509.4 324.2 507.7 326.0 506.5C327.8 505.3 329.8 504.1 332.0 503.0C334.2 501.9 337.8 500.5 339.0 500.0M322.0 511.0C322.8 510.6 325.2 509.3 327.0 508.5C328.8 507.7 330.8 506.8 333.0 506.0C335.2 505.2 338.8 504.3 340.0 504.0M353.0 506.0C353.7 505.4 355.7 503.6 357.0 502.5C358.3 501.4 359.8 500.2 361.0 499.5C362.2 498.8 363.5 498.2 364.0 498.0M354.0 508.0C354.8 507.7 357.0 506.6 358.5 506.0C360.0 505.4 361.6 504.9 363.0 504.5C364.4 504.1 366.3 503.7 367.0 503.5M352.5 503.0C353.0 502.5 354.5 500.9 355.5 500.0C356.5 499.1 357.5 498.2 358.5 497.5C359.5 496.8 361.0 496.2 361.5 496.0M318.2 512.1C319.7 511.7 324.1 510.4 327.0 509.5C329.9 508.6 332.6 507.8 335.5 507.0C338.4 506.2 341.8 504.8 344.2 504.5C346.6 504.2 348.2 505.1 350.0 505.5C351.8 505.9 353.2 506.5 355.0 507.0C356.8 507.5 358.4 508.6 360.6 508.6C362.8 508.6 365.6 507.5 368.0 507.0C370.4 506.5 372.6 505.9 375.0 505.5C377.4 505.1 380.3 504.5 382.5 504.5C384.7 504.5 386.2 505.1 388.0 505.5C389.8 505.9 391.7 506.5 393.5 507.0C395.3 507.5 397.1 507.9 399.0 508.6C400.9 509.3 402.8 510.1 405.0 511.0C407.2 511.9 410.8 513.6 412.0 514.1M349.7 484.0C350.5 484.4 352.8 485.8 354.3 486.7C355.8 487.6 357.3 488.6 358.8 489.5C360.3 490.4 362.6 491.8 363.4 492.2M355.2 482.6C356.1 483.1 358.8 484.7 360.6 485.8C362.4 486.9 364.4 487.9 366.2 489.0C368.0 490.1 370.7 491.7 371.6 492.2M390.8 468.9C391.2 469.8 392.6 472.3 393.5 474.0C394.4 475.7 395.4 477.3 396.3 479.0C397.2 480.7 398.6 483.2 399.0 484.0M394.0 468.0C394.4 468.7 395.8 470.7 396.5 472.0C397.2 473.3 397.8 474.7 398.5 476.0C399.2 477.3 400.2 479.3 400.5 480.0M384 496L390 503M387.5 494L395 503M391 492.5L399 503.5M395 492L403 505M399 492L407 506M403 493.5L410 507M299.0 530.0C299.8 529.3 302.4 527.3 304.0 526.0C305.6 524.7 307.2 523.4 308.6 522.3C310.1 521.2 311.8 520.5 312.7 519.6C313.6 518.7 313.3 517.1 314.0 516.8C314.7 516.4 316.1 517.0 317.0 517.5C317.9 518.0 318.2 518.6 319.5 519.6C320.8 520.6 323.2 522.1 325.0 523.5C326.8 524.9 329.1 528.0 330.5 527.8C331.9 527.6 332.0 523.5 333.2 522.3C334.4 521.1 336.1 521.0 337.5 520.5C338.9 520.0 340.2 519.6 341.5 519.6C342.8 519.6 344.1 520.0 345.5 520.5C346.9 521.0 349.0 522.0 349.7 522.3M344.2 527.8C345.3 527.2 348.7 525.5 351.0 524.5C353.3 523.5 355.8 521.9 357.9 521.6C360.0 521.3 361.7 522.1 363.5 522.5C365.3 522.9 367.6 523.0 368.8 523.7C370.0 524.4 370.0 525.5 370.5 526.5C371.0 527.5 371.4 529.4 371.6 530.0M364.7 519.6C365.0 518.8 365.7 516.4 366.5 515.0C367.3 513.6 368.2 512.5 369.5 511.5C370.8 510.5 372.5 509.5 374.0 509.0C375.5 508.5 376.6 508.4 378.4 508.6C380.2 508.9 382.9 509.6 385.0 510.5C387.1 511.4 389.1 512.3 390.8 514.1C392.6 515.9 394.1 518.9 395.5 521.5C396.9 524.1 398.4 528.6 399.0 530.0M336.0 527.0C336.7 526.7 338.7 525.6 340.0 525.0C341.3 524.4 342.7 523.9 344.0 523.5C345.3 523.1 347.3 522.7 348.0 522.5M337.0 530.0C337.7 529.8 339.7 529.0 341.0 528.5C342.3 528.0 343.7 527.4 345.0 527.0C346.3 526.6 348.3 526.2 349.0 526.0M433.0 403.0C433.0 404.9 432.4 410.9 433.0 414.4C433.6 417.9 434.8 421.2 436.9 424.1C439.0 427.0 442.5 430.3 445.6 431.9C448.7 433.5 451.9 433.6 455.3 433.8C458.7 434.0 463.2 433.9 466.0 432.8C468.8 431.7 470.0 429.3 471.8 427.0C473.6 424.7 475.6 421.6 476.6 419.2C477.6 416.8 477.9 415.1 477.6 412.5C477.3 409.9 475.8 406.3 474.7 403.7C473.6 401.1 471.4 398.0 470.8 396.9M450.4 403.7C450.2 405.5 449.5 410.3 449.5 414.4C449.5 418.4 450.2 425.7 450.4 428.0M459.2 400.8C459.7 402.8 462.0 408.4 462.1 412.5C462.2 416.6 460.4 423.0 460.1 425.1M455.8 414.5v1.5M455.5 419.5v1.5M455 426.5v1.5M411.6 395.0C411.5 396.5 411.0 401.1 411.0 404.0C411.0 406.9 410.9 410.2 411.6 412.5C412.3 414.8 413.7 416.2 415.0 418.0C416.3 419.8 417.5 421.6 419.4 423.1C421.3 424.6 423.3 426.8 426.2 427.0C429.1 427.2 435.1 424.6 436.9 424.1M421.3 403.7C421.8 402.9 423.0 400.4 424.0 399.0C425.0 397.6 426.7 395.7 427.2 395.0M429.1 402.8C429.8 402.1 431.9 399.8 433.5 398.5C435.1 397.2 437.9 395.6 438.8 395.0M493.1 409.5C493.2 408.2 493.6 404.4 493.8 402.0C494.0 399.6 494.1 396.2 494.1 395.0M493.1 409.5C492.5 410.4 490.6 413.2 489.5 415.0C488.4 416.8 487.6 419.2 486.3 420.2C485.1 421.2 483.4 420.8 482.0 421.0C480.6 421.2 478.3 421.2 477.6 421.2M500.9 414.4C501.3 412.8 502.5 408.2 503.5 405.0C504.5 401.8 506.2 396.7 506.7 395.0M500.9 414.4C500.2 413.8 498.3 411.8 497.0 410.5C495.7 409.2 493.8 407.2 493.1 406.6M437.8 425.1C437.9 427.6 438.3 435.3 438.5 440.0C438.7 444.7 438.8 447.8 438.8 453.2C438.9 458.6 438.8 469.4 438.8 472.6M446.1 432.8C446.2 436.2 446.4 446.2 446.6 453.2C446.8 460.1 447.4 470.9 447.5 474.5M460.1 433.8C460.0 437.5 459.6 448.3 459.5 456.0C459.4 463.7 459.2 476.0 459.2 480.0M467.9 432.8C467.8 436.7 467.3 448.1 467.0 456.0C466.7 463.9 466.2 476.0 466.0 480.0M485.4 420.2C484.9 422.8 483.5 430.5 482.5 436.0C481.5 441.5 480.3 448.2 479.5 453.2C478.7 458.2 478.1 461.5 477.5 466.0C476.9 470.5 476.0 477.7 475.7 480.0M493.1 412.5C492.8 414.6 492.0 420.6 491.5 425.0C491.0 429.4 490.8 432.9 490.2 438.6C489.6 444.3 488.8 452.1 488.0 459.0C487.2 465.9 485.8 476.5 485.4 480.0M439 432L446 427M439 437L446.2 432M439 442L446.3 437M439 447L446.4 442M439 452L446.5 447M440 456L446.5 452M461 439L467.5 434M460.5 444L467.3 439M460.3 449L467 444M460 454L466.8 449M484.5 424L491.5 417M483.5 430L491 423M482.5 436L490.5 429M481.5 442L490 436M480.5 448L489 443M480 453L487 449M446.6 447.4C446.8 447.2 447.4 446.5 448.0 446.0C448.6 445.5 448.7 445.6 450.4 444.5C452.1 443.4 455.3 440.9 458.2 439.6C461.1 438.3 464.7 437.5 467.9 436.7C471.1 435.9 475.0 435.6 477.6 434.8C480.2 434.0 482.4 432.4 483.4 431.9M450.4 444.5C450.1 444.9 448.7 446.3 448.5 447.0C448.3 447.7 447.9 448.3 449.0 448.5C450.1 448.7 454.2 448.3 455.3 448.3M492.1 431.9C493.7 431.7 498.8 430.9 501.8 430.9C504.8 430.9 508.6 431.7 510.0 431.9M487 444.5L488.5 447M476.5 450.5L478 452.5M495.5 444L497 449M447.5 464.3C448.6 464.6 452.2 465.1 454.3 465.8C456.4 466.5 459.1 468.2 460.1 468.7M466.0 466.8C467.0 466.5 470.1 465.6 472.0 465.0C473.9 464.4 476.7 463.2 477.6 462.9M486.3 459.0C486.9 459.4 488.9 460.5 490.0 461.5C491.1 462.5 491.9 463.6 493.1 464.8C494.3 466.0 496.4 468.1 497.0 468.7M448 468L453 474M449 466L456 473M452 466L459 472M455 467L459.5 471M467 470L472 466M468 473.5L475 468M470 476L477 470M488 464L493 468M487 467.5L492 472M486 471L490.5 475M400.0 461.0C401.0 460.8 403.5 460.2 405.8 460.0C408.1 459.8 411.2 458.7 413.6 459.5C416.0 460.3 418.9 462.6 420.4 464.8C421.8 467.0 421.5 470.5 422.3 472.6C423.1 474.7 424.7 476.6 425.2 477.4M424.2 466.8C424.5 465.3 425.2 460.1 426.2 458.0C427.2 455.9 428.4 455.1 430.0 454.0C431.6 452.9 434.4 451.1 435.9 451.3C437.4 451.5 438.3 454.5 438.8 455.1M429.1 466.8L432.0 462.9M432.0 468.7L435.9 463.9M431.0 470.5L435.0 466.0M432.0 477.4C433.1 476.8 436.9 473.8 438.8 473.6C440.7 473.5 442.8 476.0 443.6 476.5M404 466L406 474M408 465L410 475M412 466L414 476M314.1 516.9C313.0 517.5 310.3 518.2 307.7 520.6C305.1 523.0 301.9 529.1 298.5 531.5C295.1 533.9 290.6 533.4 287.6 535.2C284.6 537.0 282.0 540.1 280.3 542.5C278.6 544.9 278.7 547.1 277.5 549.8C276.3 552.5 274.4 554.9 273.0 558.9C271.6 562.9 270.4 569.9 269.3 573.5C268.2 577.1 267.1 577.1 266.6 580.8C266.2 584.5 265.9 591.5 266.6 595.5C267.4 599.5 267.3 602.6 271.1 604.6C274.9 606.6 284.8 607.6 289.4 607.3C294.0 607.0 294.9 604.5 298.5 602.8C302.1 601.1 306.9 598.8 311.3 597.3C315.7 595.8 322.7 594.2 325.0 593.6M314.1 516.9C315.4 517.8 319.1 520.2 322.0 522.0C324.9 523.8 329.2 527.8 331.4 527.9C333.6 528.0 332.7 523.8 335.1 522.4C337.5 521.0 343.6 519.7 346.0 519.7C348.4 519.7 349.1 522.0 349.7 522.4M305.8 537.9C307.6 539.0 313.8 541.4 316.8 544.3C319.9 547.2 322.6 550.1 324.1 555.3C325.6 560.5 325.9 569.0 325.9 575.4C325.9 581.8 324.4 590.6 324.1 593.6M271.1 604.6C272.6 602.8 276.3 596.7 280.3 593.6C284.3 590.5 290.0 588.4 294.9 586.3C299.8 584.2 304.6 582.6 309.5 580.8C314.4 579.0 321.7 576.3 324.1 575.4M289.4 606.4C290.0 604.3 291.6 597.0 293.1 593.6C294.6 590.2 297.6 587.5 298.5 586.3M267.5 579.0L274.8 576.3M282.0 557.0C282.8 557.2 285.4 557.5 287.0 558.0C288.6 558.5 290.6 559.8 291.3 560.1M299.0 566.3C299.7 567.4 301.7 570.7 303.0 573.0C304.3 575.3 306.1 578.9 306.7 580.1M291.3 572.4C291.8 573.2 293.2 575.7 294.0 577.5C294.8 579.3 295.6 582.2 295.9 583.2M311.0 551.0C311.7 551.8 313.8 554.0 315.0 556.0C316.2 558.0 317.5 561.8 318.0 563.0M285.0 578.0C285.7 578.5 287.8 579.8 289.0 581.0C290.2 582.2 291.5 584.3 292.0 585.0M267 586L276 587.8M267 589.5L277 590.5M268 592.5L276 593M310 541L318 543M312 545.5L320 548M336 524L347 529M335 529L346 533M337 533L347 537M339 537L347 540M299 589L305 584M301 592L308 586M303 594.5L310 589M306 596L313 590M282 598L288 592M285 601L291 595M316 566L322 572M314 572L322 578M313 578L321 583M398.3 579.5C397.6 576.1 395.5 564.6 393.8 558.9C392.1 553.1 389.7 549.0 388.0 545.0C386.3 541.0 385.8 538.2 383.5 535.0C381.2 531.8 377.6 528.3 374.4 525.8C371.2 523.3 365.6 522.0 364.1 520.1C362.6 518.2 363.5 516.3 365.2 514.4C366.9 512.5 371.0 509.3 374.4 508.7C377.8 508.1 382.4 509.5 385.8 511.0C389.2 512.5 392.2 513.8 394.9 517.8C397.6 521.8 400.5 530.2 401.8 535.0C403.1 539.8 403.3 541.3 402.9 546.4C402.5 551.5 400.3 560.3 399.5 565.8C398.7 571.3 398.5 577.2 398.3 579.5M394.9 517.8C396.4 517.4 400.9 514.9 404.0 515.5C407.1 516.1 410.9 518.0 413.2 521.3C415.5 524.5 417.1 530.8 417.7 535.0C418.3 539.2 417.7 542.4 416.6 546.4C415.5 550.4 413.4 554.1 410.9 558.9C408.4 563.6 403.3 572.2 401.8 574.9M417.7 535.0C418.9 535.6 423.1 536.9 424.6 538.4C426.1 539.9 426.9 541.8 426.9 544.1C426.9 546.4 426.5 548.9 424.6 552.1C422.7 555.3 419.1 559.3 415.5 563.5C411.9 567.7 405.0 574.9 402.9 577.2M398.3 579.5C395.1 575.3 383.6 559.9 378.9 554.4C374.1 548.9 373.2 548.7 369.8 546.4C366.4 544.1 361.8 542.0 358.4 540.7C355.0 539.4 351.7 539.7 349.2 538.4C346.7 537.1 344.6 534.4 343.5 532.7C342.4 531.0 342.0 529.6 342.4 528.1C342.8 526.6 344.1 524.5 345.8 523.5C347.5 522.5 349.6 522.2 352.7 521.8C355.8 521.4 362.2 521.4 364.1 521.3M348.1 539.5C346.4 540.5 341.0 543.1 337.8 545.2C334.6 547.3 330.8 550.2 328.7 552.1C326.6 554.0 324.9 554.7 325.3 556.6C325.7 558.5 329.9 561.4 331.0 563.5C332.1 565.6 332.9 566.9 332.1 569.2C331.3 571.5 327.7 574.4 326.4 577.2C325.1 580.1 324.1 583.3 324.1 586.3C324.1 589.3 326.0 593.5 326.4 595.0M325.3 557.2C328.3 557.7 338.4 558.5 343.5 560.1C348.6 561.7 352.5 564.4 356.1 566.9C359.7 569.4 363.7 573.6 365.2 574.9M328.7 585.2C331.2 584.8 338.6 584.4 343.5 582.9C348.4 581.4 352.7 577.7 358.4 576.0C364.1 574.3 371.1 572.0 377.8 572.6C384.5 573.2 394.9 578.4 398.3 579.5M363.0 587.5C366.4 587.1 377.8 586.5 383.5 585.2C389.2 583.9 394.9 580.5 397.2 579.5M381.2 531.5C382.4 534.4 385.4 541.5 388.1 548.7C390.8 555.9 395.7 570.5 397.2 574.9M373.2 551.0C374.1 553.5 377.4 562.0 378.9 565.8C380.4 569.6 381.8 572.5 382.4 573.8M380.1 557.8C380.8 559.0 382.7 562.5 384.0 565.0C385.3 567.5 387.4 571.3 388.1 572.6M388.1 564.6L392.6 577.2M353.8 563.5L360.7 573.8M358.4 564.6L365.2 573.8M339.0 572.6L350.4 574.3M405.2 547.5C404.6 549.4 402.9 554.3 401.8 558.9C400.7 563.5 398.9 572.2 398.3 574.9M405.5 553L409 549M404 561L408 557M385 540L381 537M387 546L391 543M417.7 557.8L409.7 565.8M363.0 506.4C367.4 506.0 382.0 503.5 389.2 504.1C396.4 504.7 401.9 508.5 406.3 509.8C410.7 511.1 414.0 511.7 415.5 512.1M385 500L393 512M389 500L398 513M394 501L402 513M399 502L407 514M404 504L412 515M409 506L416 516M414 508L421 520M419 512L425 524M332.9 601.0C332.9 602.7 333.5 608.0 333.0 611.0C332.5 614.0 329.3 615.9 329.8 618.7C330.3 621.5 334.7 624.3 336.0 627.9C337.3 631.5 335.4 637.7 337.5 640.3C339.6 642.9 344.4 642.5 348.3 643.3C352.2 644.1 356.6 645.1 360.7 644.9C364.8 644.6 369.4 641.0 373.0 641.8C376.6 642.6 379.5 648.5 382.3 649.5C385.1 650.5 387.4 649.5 390.0 648.0C392.6 646.5 395.7 642.1 397.7 640.3C399.7 638.5 401.3 637.7 402.0 637.2M333.2 610.1C336.6 609.2 346.3 606.7 353.3 604.6C360.3 602.5 367.9 600.9 375.2 597.3C382.5 593.6 393.5 585.1 397.2 582.7M329.6 600.9C333.6 600.1 345.1 598.5 353.3 596.4C361.5 594.3 371.6 590.8 378.9 588.2C386.2 585.6 394.1 582.0 397.2 580.8M342.2 634.1C344.2 632.3 349.9 626.4 354.5 623.3C359.1 620.2 367.3 616.9 369.9 615.6M371.6 611.9C372.8 613.7 377.1 619.2 378.9 622.9C380.7 626.5 381.9 632.0 382.5 633.8M363.8 587.8C364.8 588.2 367.7 589.2 370.0 590.0C372.3 590.8 376.3 592.1 377.6 592.5M366.8 604.8C368.3 604.3 372.9 602.8 376.0 602.0C379.1 601.2 383.8 600.5 385.3 600.2M345.3 611.0C346.4 610.8 349.4 610.3 352.0 610.0C354.6 609.7 359.2 609.5 360.7 609.4M350 624L354 630M352 621L357 628M355 619L360 626M358 617.5L363 624M361 617L366 623M458.8 475.0C458.2 478.7 456.2 489.6 455.0 497.0C453.8 504.4 452.4 512.8 451.4 519.5C450.4 526.2 449.7 531.1 449.0 537.0C448.3 542.9 447.3 552.1 447.0 555.1M463.3 475.0C462.8 478.7 461.0 489.6 460.0 497.0C459.0 504.4 458.1 512.8 457.3 519.5C456.6 526.2 456.0 531.1 455.5 537.0C455.0 542.9 454.6 552.1 454.4 555.1M455.8 527.0C457.3 524.0 461.1 514.1 464.8 509.1C468.5 504.2 473.9 500.8 478.1 497.3C482.3 493.9 488.0 489.9 490.0 488.4M490.0 488.4C488.8 492.3 485.6 504.0 482.6 512.1C479.6 520.2 474.9 530.6 472.2 537.3C469.5 544.0 467.2 549.7 466.2 552.2M459 522L466 515M462 526L470 512M465 530L474 508M468 534L478 505M470 539L480 504M427.7 516.6C428.2 519.1 428.6 526.5 430.6 531.4C432.6 536.3 436.3 542.2 439.5 546.2C442.7 550.2 448.2 553.6 449.9 555.1M427.7 516.6C427.2 514.1 423.7 505.4 424.7 501.7C425.7 498.0 430.6 496.0 433.6 494.3C436.6 492.6 439.8 490.6 442.5 491.3C445.2 492.0 448.7 497.5 449.9 498.7M432.1 495.8C433.6 498.8 438.3 507.2 441.0 513.6C443.7 520.0 447.2 530.9 448.4 534.4M430 505L434 510M431 510L436 516M433 515L438 522M435 520L441 527M437 525L443 532M440 530L445 536M451.4 555.1C452.9 555.4 458.1 555.1 460.3 556.6C462.5 558.1 464.8 562.0 464.8 564.0C464.8 566.0 462.3 568.0 460.3 568.5C458.3 569.0 454.1 567.2 452.9 567.0M424.7 552.2C426.2 551.5 429.9 547.2 433.6 547.7C437.3 548.2 443.5 551.9 447.0 555.1C450.5 558.3 453.2 565.0 454.4 567.0M430 549L437 561M435 549L441 562M440 551L446 563M444 553L450 565M424.7 552.2C425.6 553.5 427.4 557.7 430.0 560.0C432.6 562.3 436.2 564.8 440.0 566.0C443.8 567.2 450.8 566.8 452.9 567.0M464.8 568.5C467.0 567.8 473.7 564.8 478.1 564.0C482.6 563.2 486.1 563.0 491.5 564.0C496.9 565.0 505.2 568.5 510.8 570.0C516.4 571.5 522.6 572.5 525.0 573.0M466.2 571.5C469.2 571.8 477.3 571.8 484.0 573.0C490.7 574.2 499.5 576.9 506.3 578.9C513.1 580.9 521.9 583.8 525.0 584.8M475.1 558.1C477.1 556.6 483.0 552.2 487.0 549.2C491.0 546.2 495.4 543.8 498.9 540.3C502.4 536.8 506.1 534.3 507.8 528.4C509.5 522.5 510.1 511.1 509.3 504.7C508.6 498.3 504.3 492.3 503.3 489.8M487.0 543.3C489.0 542.8 494.7 542.3 498.9 540.3C503.1 538.3 508.7 533.6 512.2 531.4C515.7 529.2 518.5 527.7 519.7 527.0M518.2 558.1C518.5 556.6 518.6 551.2 519.7 549.2C520.8 547.2 524.1 546.7 525.0 546.2M484 552L492 543M480 556L488 547M488 556L496 549M395.0 519.5C396.2 522.0 401.2 528.2 402.4 534.4C403.6 540.6 403.1 549.2 402.4 556.6C401.7 564.0 398.7 575.2 398.0 578.9M395.0 516.6C396.5 515.9 400.9 511.4 403.9 512.1C406.9 512.8 410.3 516.5 412.8 521.0C415.3 525.5 418.2 532.6 418.7 538.8C419.2 545.0 417.5 552.6 415.8 558.1C414.1 563.6 409.6 569.3 408.4 571.5M395.0 500.2C397.5 500.9 405.4 502.7 409.8 504.7C414.2 506.7 418.0 509.6 421.7 512.1C425.4 514.6 430.4 518.3 432.1 519.5M403.9 504.7C405.4 506.4 410.3 511.3 413.0 515.0C415.7 518.7 417.8 523.3 420.2 527.0C422.6 530.7 426.4 535.6 427.7 537.3M404 538L407 546M406 548L410 556M400 560L404 565M397 568L402 574M411 534L416 530M412 542L417 538M395.0 584.8C399.9 584.8 414.8 584.3 424.7 584.8C434.6 585.3 446.5 589.3 454.4 587.8C462.3 586.3 468.0 576.9 472.2 575.9C476.4 574.9 477.9 578.9 479.6 581.9C481.3 584.9 482.4 589.9 482.6 593.7C482.9 597.6 481.4 603.1 481.1 605.0M412.8 577.4C414.8 576.5 420.6 573.7 425.0 572.0C429.4 570.3 434.6 567.8 439.5 567.0C444.4 566.2 451.9 567.0 454.4 567.0M398.0 578.0C400.0 577.5 406.3 576.0 410.0 575.0C413.7 574.0 418.3 572.5 420.0 572.0M400 587L408 605M406 587L414 605M412 587L420 605M418 587L426 605M425 588L433 605M432 589L440 605M440 589L447 603M448 589L454 600M456 588L462 598M463 585L470 595M470 580L476 590M418 579L427 572M424 579L433 572M430 580L439 573M436 580L445 573M443 581L452 574M449 582L458 574M456 583L463 577M462 581L467 576M400 571L405 582M402 566L409 580M407 565L413 578M468 568L474 575M470 590L490 604M476 592L495 603M484 589L500 597M395.0 497.3C396.7 497.1 401.7 495.6 405.4 495.8C409.1 496.0 414.6 498.7 417.3 498.7C420.0 498.7 421.0 496.3 421.7 495.8M498.9 489.8C500.4 489.6 505.3 487.9 507.8 488.4C510.3 488.9 512.7 492.1 513.7 492.8M461.8 537.3C462.5 536.8 464.5 534.6 466.2 534.4C467.9 534.1 471.2 535.6 472.2 535.8M490.0 564.0C490.2 562.0 492.0 555.7 491.5 552.2C491.0 548.8 487.8 544.8 487.0 543.3M551.4 529.4C552.5 528.6 554.8 525.7 557.7 524.6C560.6 523.5 564.9 523.0 568.9 523.0C572.9 523.0 578.2 523.3 581.7 524.6C585.2 525.9 587.3 530.2 589.7 531.0C592.1 531.8 594.0 528.6 596.1 529.4C598.2 530.2 599.6 534.5 602.5 535.8C605.4 537.1 610.5 536.1 613.7 537.4C616.9 538.7 620.1 541.7 621.7 543.8C623.3 545.9 622.0 549.7 623.3 550.2C624.6 550.7 627.3 546.7 629.7 547.0C632.1 547.3 635.6 549.7 637.7 551.8C639.8 553.9 641.2 557.7 642.5 559.8C643.8 561.9 643.8 562.2 645.7 564.6C647.6 567.0 651.6 571.5 653.7 574.1C655.8 576.8 657.5 577.0 658.5 580.5C659.5 584.0 660.0 590.9 660.0 594.9C660.0 598.9 659.5 601.0 658.5 604.5C657.5 608.0 655.8 612.2 653.7 615.7C651.6 619.2 648.6 622.4 645.7 625.3C642.8 628.2 639.3 632.5 636.1 633.3C632.9 634.1 629.7 631.4 626.5 630.1C623.3 628.8 619.8 626.6 616.9 625.3C614.0 624.0 611.8 624.0 608.9 622.1C606.0 620.2 601.7 617.0 599.3 614.1C596.9 611.2 595.3 608.2 594.5 604.5C593.7 600.8 593.7 595.2 594.5 591.7C595.3 588.2 598.5 585.0 599.3 583.7M599.3 583.7C602.2 582.1 611.3 576.1 616.9 574.1C622.5 572.1 628.4 572.0 632.9 571.7C637.4 571.4 642.2 572.4 644.1 572.5M602.5 590.1C604.9 589.8 612.9 588.2 616.9 588.5C620.9 588.8 624.9 591.2 626.5 591.7M604.1 591.7C604.6 592.4 605.9 594.7 607.0 596.0C608.1 597.3 609.9 599.1 610.5 599.7M608.9 601.3C609.4 601.8 610.9 603.4 612.0 604.5C613.1 605.6 614.8 607.2 615.3 607.7M623.3 607.7C623.9 608.8 625.9 611.9 627.0 614.0C628.1 616.1 629.2 619.4 629.7 620.5M631.3 594.9C632.2 596.8 635.1 602.3 637.0 606.0C638.9 609.7 641.6 615.4 642.5 617.3M642.5 596.5C643.2 596.9 645.2 598.2 646.5 599.0C647.8 599.8 649.8 600.9 650.5 601.3M623.3 575.7C624.9 575.5 629.8 574.8 633.0 574.5C636.2 574.2 640.9 574.2 642.5 574.1M628.1 579.7C629.2 579.6 632.4 579.1 634.5 579.0C636.6 578.9 639.8 578.9 640.9 578.9M624 566L630 562M626 568.5L633 564M567.3 524.6C567.3 525.2 567.3 526.4 567.3 528.0C567.3 529.6 567.3 533.2 567.3 534.2M592.9 531.0C592.1 532.6 589.4 537.7 588.1 540.6C586.8 543.5 585.4 547.3 584.9 548.6M600.9 539.0C600.5 539.5 599.3 540.9 598.5 542.0C597.7 543.1 596.5 544.8 596.1 545.4M553 531L558 536M555 529L561 535M558 528L564 534M532.2 537.4C533.0 536.6 534.1 533.7 537.0 532.6C539.9 531.5 546.1 530.5 549.8 531.0C553.5 531.5 556.6 533.4 559.3 535.8C561.9 538.2 564.6 541.9 565.7 545.4C566.8 548.9 566.5 554.2 565.7 556.6C564.9 559.0 561.7 559.3 560.9 559.8M532.2 537.4C532.7 537.9 533.3 539.8 535.4 540.6C537.5 541.4 542.6 541.3 545.0 542.2C547.4 543.1 547.9 545.4 549.8 546.2C551.7 547.0 554.9 546.6 556.2 547.0C557.5 547.4 557.5 548.3 557.7 548.6M517.8 558.2C517.8 557.1 516.5 553.7 517.8 551.8C519.1 549.9 522.6 547.8 525.8 547.0C529.0 546.2 533.8 545.9 537.0 547.0C540.2 548.1 544.7 551.5 545.0 553.4C545.3 555.3 541.3 557.7 538.6 558.2C535.9 558.7 531.9 556.5 529.0 556.6C526.1 556.7 522.3 558.6 521.0 559.0M545.0 556.6C545.3 558.5 545.3 564.8 546.6 567.7C547.9 570.6 550.6 573.0 553.0 574.1C555.4 575.2 558.8 575.2 560.9 574.1C563.0 573.0 565.4 569.8 565.7 567.7C566.0 565.6 564.4 563.0 562.5 561.4C560.6 559.8 555.9 558.7 554.6 558.2M567.3 567.7C569.4 566.6 575.7 563.1 580.0 561.0C584.3 558.9 590.8 556.0 592.9 555.0M567.3 567.7C569.8 567.9 577.2 568.5 582.0 569.0C586.8 569.5 593.8 570.7 596.1 571.0M567.3 567.7C567.8 566.2 568.9 561.6 570.0 559.0C571.1 556.4 573.1 553.0 573.7 551.8M567.3 567.7C569.9 568.6 577.9 571.1 583.0 573.0C588.1 574.9 595.2 578.0 597.7 579.0M568 566L576 553M569 567L584 556M570 568L588 560M569 569L590 565M570 570L592 574M569 571L590 577M565.7 572.5C567.6 572.2 573.2 570.5 576.9 571.0C580.6 571.5 584.6 573.6 588.1 575.7C591.6 577.8 596.1 582.4 597.7 583.7M505.0 569.3C507.7 569.6 515.7 571.5 521.0 571.0C526.3 570.5 533.0 568.9 537.0 566.2C541.0 563.5 543.7 556.9 545.0 555.0M505.0 578.9C510.3 580.8 526.4 586.4 537.0 590.1C547.6 593.8 559.3 598.6 568.9 601.3C578.5 604.0 590.2 605.3 594.5 606.1M517.8 578.9C523.1 581.0 540.2 589.8 549.8 591.7C559.4 593.6 568.1 590.9 575.3 590.1C582.5 589.3 590.0 587.4 592.9 586.9M565.7 577.3C566.4 578.2 568.4 581.1 570.0 583.0C571.6 584.9 574.4 587.6 575.3 588.5M534 582L540 591M539 583L545 593M544 585L550 595M549 587L555 597M554 589L560 598M559 590L565 599M564 591L569 600M578 592L582 600M583 592L587 601M588 593L592 603M505.0 539.0C506.6 537.7 511.1 532.9 514.6 531.0C518.1 529.1 523.9 528.3 525.8 527.8M585 588L590 583M588 590L593 585M380.0 649.1C380.8 649.3 383.1 650.6 384.6 650.2C386.1 649.8 387.0 647.8 389.1 646.8C391.2 645.8 395.8 645.8 397.1 644.5C398.4 643.2 396.5 639.3 397.1 638.8C397.7 638.3 397.9 641.1 400.6 641.6C403.3 642.1 410.5 642.2 413.1 641.6C415.8 641.0 415.4 637.8 416.5 637.7C417.6 637.6 418.1 640.6 420.0 641.1C421.9 641.6 425.1 640.7 428.0 640.5C430.9 640.3 435.2 640.6 437.1 639.9C439.0 639.2 438.8 638.2 439.4 636.5C440.0 634.8 439.0 629.9 440.5 629.7C442.0 629.5 446.4 635.0 448.5 635.4C450.6 635.8 451.6 632.8 453.1 631.9C454.6 631.0 456.2 630.8 457.7 629.7C459.2 628.6 461.1 628.0 462.2 625.1C463.3 622.2 463.9 614.0 464.5 612.5C465.1 611.0 464.3 615.1 465.6 616.0C466.9 616.9 470.0 619.0 472.5 617.7C475.0 616.4 479.0 611.9 480.5 608.0C482.0 604.1 481.2 597.9 481.6 594.3C482.0 590.7 483.0 588.6 482.8 586.3C482.6 584.0 481.8 582.1 480.5 580.6C479.2 579.1 476.7 578.8 474.8 577.1C472.9 575.4 470.1 571.4 469.1 570.3M389.1 605.7C389.1 606.8 388.3 609.5 389.1 612.5C389.9 615.5 392.9 622.1 393.7 624.0M391.4 616.0C392.2 616.7 394.5 618.7 396.0 620.0C397.5 621.3 399.8 623.3 400.6 624.0M396.0 601.1C397.1 603.0 400.1 608.7 402.8 612.5C405.5 616.3 410.5 622.1 412.0 624.0M398.3 585.1C398.0 586.2 396.9 589.7 396.5 592.0C396.1 594.3 396.1 597.7 396.0 598.8M400 590L410 610M403 589L414 611M406 588L417 613M410 590L420 614M414 592L422 612M418 594L424 608M423.4 598.8C424.7 599.9 428.9 602.7 431.4 605.7C433.9 608.8 436.5 613.3 438.2 617.1C439.9 620.9 441.1 626.6 441.7 628.5M444.0 612.5C444.6 614.4 446.6 620.4 447.4 624.0C448.1 627.6 448.3 632.5 448.5 634.2M407.4 586.3C410.4 588.0 420.8 593.3 425.7 596.5C430.6 599.7 433.9 604.2 437.1 605.7C440.3 607.2 443.8 605.7 445.1 605.7M408.5 585.1C413.3 585.9 428.5 589.1 437.1 589.7C445.7 590.3 453.0 588.1 459.9 588.5C466.8 588.9 475.1 591.4 478.2 592.0M399.4 585.1C403.8 585.0 417.5 584.4 425.7 584.6C433.9 584.8 439.9 585.3 448.5 586.3C457.1 587.3 472.3 590.0 477.1 590.8M409.7 579.4C413.3 578.3 424.0 574.3 431.4 572.6C438.8 570.9 448.3 569.7 454.2 569.1C460.1 568.5 464.7 569.1 466.8 569.1M428 610L436 628M431 615L438 632M426 616L433 632M426 621L431 636M442 612L446 624M448 614L452 628M452 618L456 626M445 577L452 583M450 577L457 584M455 578L462 585M460 578L467 586M464 580L471 588M468 583L474 591M472 586L478 594M452 590L460 606M457 590L465 605M462 591L469 605M467 592L473 604M472 594L477 604M380.0 609.1C381.5 608.1 386.4 605.9 389.1 603.4C391.8 600.9 394.5 597.3 396.0 594.3C397.5 591.2 397.9 586.6 398.3 585.1M380.0 589.7C381.9 588.9 388.3 586.8 391.4 585.1C394.4 583.4 397.1 580.4 398.3 579.4M436.0 374.2C437.2 373.3 440.3 370.4 443.4 368.7C446.4 367.0 450.8 364.7 454.3 364.1C457.8 363.5 461.5 364.1 464.4 365.0C467.3 365.9 469.4 367.5 471.7 369.6C474.0 371.7 476.7 375.2 478.1 377.8C479.5 380.4 479.8 383.0 479.9 385.1C480.0 387.2 479.1 389.7 479.0 390.6M441.5 376.9C442.6 376.1 445.1 373.5 447.9 372.4C450.6 371.3 454.5 370.0 458.0 370.1C461.5 370.2 465.5 371.6 468.9 373.3C472.2 375.1 476.6 379.4 478.1 380.6M446.1 375.1L448.8 379.7M451.6 371.4L452.5 378.7M457.1 370.5L457.1 379.7M463.4 372.4L460.7 380.6M468.9 375.1L464.4 381.5M472.6 379.7L468.0 384.2M443.0 384.0C443.3 383.1 444.9 381.7 446.0 381.5C447.1 381.3 448.5 383.2 449.5 383.0C450.5 382.8 450.9 380.7 452.0 380.5C453.1 380.3 455.0 381.2 456.0 382.0C457.0 382.8 457.2 384.8 458.0 385.0C458.8 385.2 459.8 383.2 461.0 383.0C462.2 382.8 464.0 383.3 465.0 384.0C466.0 384.7 466.2 386.2 467.0 387.0C467.8 387.8 469.6 388.0 470.0 389.0C470.4 390.0 470.0 391.8 469.5 393.0C469.0 394.2 468.1 395.3 467.0 396.0C465.9 396.7 464.2 397.1 463.0 397.0C461.8 396.9 461.0 395.3 460.0 395.5C459.0 395.7 458.2 397.3 457.0 398.0C455.8 398.7 454.3 399.7 453.0 399.7C451.7 399.7 450.0 398.8 449.0 398.0C448.0 397.2 447.9 395.7 447.0 395.0C446.1 394.3 444.3 394.8 443.5 394.0C442.7 393.2 442.3 391.2 442.4 390.0C442.5 388.8 443.9 388.0 444.0 387.0C444.1 386.0 442.7 384.9 443.0 384.0M447.0 389.0C447.5 389.3 449.0 391.0 450.0 391.0C451.0 391.0 452.0 388.8 453.0 389.0C454.0 389.2 455.0 391.8 456.0 392.0C457.0 392.2 458.5 390.3 459.0 390.0M450.0 395.0C450.5 394.7 452.0 393.0 453.0 393.0C454.0 393.0 455.5 394.7 456.0 395.0M462 386.5a2 2 0 1 1 0.1 0M448 385a1.6 1.6 0 1 1 0.1 0M436.0 375.1C434.3 375.7 429.2 377.2 426.0 378.7C422.8 380.2 418.9 382.4 416.9 384.2C414.9 386.0 415.0 386.9 414.1 389.7C413.2 392.4 411.8 397.0 411.4 400.7C410.9 404.4 410.6 408.6 411.4 411.6C412.2 414.6 414.0 416.5 416.0 418.9C418.0 421.3 421.2 424.8 423.3 426.2C425.4 427.6 426.6 427.7 428.7 427.1C430.8 426.5 434.8 423.4 436.0 422.6M415.0 389.7C417.1 389.2 423.4 387.8 427.8 387.0C432.2 386.2 439.2 385.4 441.5 385.1M420.5 404.3C421.9 402.5 425.2 396.1 428.7 393.4C432.2 390.7 439.4 388.8 441.5 387.9M427.8 402.5C428.8 401.4 431.7 397.8 434.0 396.0C436.3 394.2 440.2 392.2 441.5 391.5M431.5 402.5C432.2 401.6 434.2 398.5 436.0 397.0C437.8 395.5 441.3 394.0 442.4 393.4M469.8 391.5C471.6 392.3 477.9 394.1 480.8 396.1C483.7 398.1 485.2 400.8 487.2 403.4C489.2 406.0 493.0 409.0 492.7 411.6C492.4 414.2 487.8 417.4 485.4 418.9C483.0 420.4 479.3 420.5 478.1 420.8M470.8 393.4C471.7 394.8 474.1 398.3 476.2 401.6C478.3 404.9 482.3 411.4 483.5 413.4M472.6 392.4C473.7 393.5 476.9 396.7 479.0 399.0C481.1 401.3 484.3 404.9 485.4 406.1M475.3 392.4C476.2 393.0 479.0 394.6 481.0 396.0C483.0 397.4 486.2 399.9 487.2 400.7M480.8 377.8C481.2 376.0 482.1 369.6 483.5 366.9C484.9 364.2 486.9 362.8 489.0 361.4C491.1 360.0 494.2 359.3 496.3 358.7C498.4 358.1 500.9 357.9 501.8 357.7M485.4 366.9C485.2 369.5 483.3 375.9 484.5 382.4C485.7 388.9 489.8 400.6 492.7 406.1C495.6 411.6 500.3 413.8 501.8 415.3M489.0 366.0C489.1 368.7 488.3 376.3 489.5 382.4C490.7 388.5 493.7 398.2 496.3 402.5C498.9 406.8 503.6 407.1 505.0 408.0M492.7 370.5C493.0 372.8 493.1 379.5 494.5 384.2C495.9 388.9 499.8 396.4 500.9 398.8M480.8 377.8C481.2 380.4 481.8 388.7 483.5 393.4C485.2 398.1 487.8 402.5 490.8 406.1C493.9 409.8 500.0 413.8 501.8 415.3M496.5 363.0C496.8 365.5 496.9 373.2 498.0 378.0C499.1 382.8 502.2 389.7 503.0 392.0M414.1 355.0C414.2 355.8 414.4 358.0 414.5 360.0C414.6 362.0 414.1 366.7 415.0 366.9C415.9 367.1 418.3 363.0 420.0 361.0C421.7 359.0 424.2 356.0 425.1 355.0M508.0 449.0C506.2 453.3 500.7 466.0 497.0 475.0C493.3 484.0 489.3 493.8 486.0 503.0C482.7 512.2 479.8 521.3 477.0 530.0C474.2 538.7 470.4 550.9 469.1 555.1M512.5 453.0C510.8 457.2 505.6 469.2 502.0 478.0C498.4 486.8 494.3 497.0 491.0 506.0C487.7 515.0 484.9 523.8 482.0 532.0C479.1 540.2 475.2 551.2 473.9 555.1M392.4 497.5C393.7 496.4 398.3 492.5 400.4 491.2C402.5 489.9 402.3 489.1 405.2 489.6C408.1 490.1 415.1 492.5 418.0 494.3C420.9 496.1 421.1 500.2 422.7 500.7C424.3 501.2 425.1 498.8 427.5 497.5C429.9 496.2 434.2 493.2 437.1 492.7C440.0 492.2 443.0 493.5 445.1 494.3C447.2 495.1 449.1 497.0 449.9 497.5M370.0 492.7C372.7 494.0 379.3 498.3 386.0 500.7C392.7 503.1 403.1 504.7 410.0 507.1C416.9 509.5 424.6 513.8 427.5 515.1M370.0 508.7C372.7 508.4 380.7 506.6 386.0 507.1C391.3 507.6 396.7 509.2 402.0 511.9C407.3 514.6 413.8 519.6 418.0 523.1C422.2 526.6 425.9 531.1 427.5 532.7M412 508L420 516M416 508L424 517M420 509L428 519M424 511L431 521M428 513L434 524M432 516L438 527M436 520L441 530M459.5 478.4C461.1 478.1 465.9 476.5 469.1 476.8C472.3 477.1 476.2 478.5 478.7 480.0C481.2 481.5 483.8 484.0 484.0 486.0C484.2 488.0 481.7 491.3 480.0 492.0C478.3 492.7 475.0 490.3 474.0 490.0M534.8 399.6C536.1 400.1 539.5 401.5 542.7 402.8C545.9 404.1 549.4 407.1 553.9 407.6C558.4 408.1 565.6 407.3 569.9 406.0C574.2 404.7 576.6 401.7 579.5 399.6C582.4 397.5 586.2 394.3 587.5 393.2M518.8 399.6C520.4 399.9 525.5 401.7 528.4 401.2C531.3 400.7 534.5 398.3 536.4 396.4C538.3 394.5 539.1 391.1 539.6 390.0M490.0 396.4C491.6 398.8 497.5 407.6 499.6 410.8C501.7 414.0 500.9 416.4 502.8 415.6C504.7 414.8 508.4 410.3 510.8 406.0C513.2 401.7 516.1 392.7 517.2 390.0M555.0 394.0C555.8 395.0 558.8 400.3 560.0 400.0C561.2 399.7 560.8 392.2 562.0 392.0C563.2 391.8 569.3 399.2 567.0 399.0C564.7 398.8 550.3 391.2 548.0 391.0C545.7 390.8 552.2 396.8 553.0 398.0" fill="none" stroke="#0c0c0c" stroke-width="1.3" stroke-linecap="round" stroke-linejoin="round"/>
</svg>
<div class="abs" style="left:264px;top:259px;width:398px;height:394px;border:2px solid #5b7ca6"></div>
<div class="abs" style="left:443px;top:446px;width:40px;height:2px;background:#8d8d8d;top:455px"></div>
<div class="abs" style="left:462px;top:436px;width:2px;height:40px;background:#8d8d8d"></div>
<!-- handles -->
<svg class="abs" style="left:234px;top:229px" width="32" height="32"><circle cx="16" cy="16" r="15" fill="#b01227"/><path d="M11.5 11.5L20.5 20.5M20.5 11.5L11.5 20.5" stroke="#dcdcdc" stroke-width="2.8" stroke-linecap="round"/></svg>
<svg class="abs" style="left:660px;top:229px" width="32" height="32"><circle cx="16" cy="16" r="13.2" fill="#6a8db8"/><path d="M9.8 17A6.1 6.1 0 1 0 15.6 10.4" stroke="#dcdcdc" stroke-width="2.8" fill="none"/><path d="M10.6 10.6L16.2 7.2V14Z" fill="#dcdcdc"/></svg>
<svg class="abs" style="left:234px;top:651px" width="32" height="32"><circle cx="16" cy="16" r="13.2" fill="#6a8db8"/><rect x="10.2" y="14.3" width="11" height="7.7" rx="0.8" fill="#d8d8d8"/><path d="M12.6 14.5V12.2A3.2 3.2 0 0 1 19 12.2V14.5" stroke="#d8d8d8" stroke-width="2" fill="none"/></svg>
<svg class="abs" style="left:660px;top:651px" width="32" height="32"><circle cx="16" cy="16" r="15" fill="#6a8db8"/><path d="M11 11L15.8 11.8L11.8 15.8Z M21 21L16.2 20.2L20.2 16.2Z" fill="#e0e0e0"/><path d="M12.5 12.5L14.8 14.8M17.2 17.2L19.5 19.5" stroke="#e0e0e0" stroke-width="2"/></svg>
<div class="abs" style="left:451px;top:232px;width:24px;height:16px;background:#fff"></div>
<div class="t" style="left:453px;top:234px;font-size:12px;color:#555">5.5"</div>
<div class="abs" style="left:686px;top:444px;width:41px;height:16px;background:#fff"></div>
<div class="t" style="left:688px;top:446px;font-size:12px;color:#555">5.443"</div>

<!-- RIGHT PANEL -->
<div class="abs" style="left:1258px;top:49px;width:260px;height:825px;background:#f4f5f7"></div>
<div class="abs" style="left:1258px;top:49px;width:260px;height:67px;background:#e3e3e5"></div>
<div class="abs" style="left:1258px;top:70px;width:260px;height:1px;background:#d0d0d2"></div>
<div class="abs" style="left:1258px;top:69.6px;width:130px;height:1.4px;background:#4a545c"></div>
<div class="abs" style="left:1258px;top:116px;width:260px;height:1px;background:#c4c4c6"></div>
<div class="pt" style="left:1305px;top:53px;font-size:12px;letter-spacing:-0.2px">Layers</div>
<div class="pt" style="left:1424px;top:53px;font-size:12px;letter-spacing:-0.1px">Color Sync</div>
<svg class="abs" style="left:1258px;top:71px" width="260" height="45" fill="none" stroke-width="1">
  <g stroke="#bdbdbf">
    <rect x="20.9" y="7.9" width="16.3" height="13.8"/>
    <rect x="23.4" y="10.4" width="7.6" height="6.2"/>
    <rect x="27" y="12.6" width="7.6" height="6.9"/>
    <g fill="#e3e3e5"><rect x="19.5" y="6.5" width="2.8" height="2.8" rx="0.8"/><rect x="35.8" y="6.5" width="2.8" height="2.8" rx="0.8"/><rect x="19.5" y="20.3" width="2.8" height="2.8" rx="0.8"/><rect x="35.8" y="20.3" width="2.8" height="2.8" rx="0.8"/></g>
    <rect x="85.7" y="7.4" width="9.1" height="9.2"/>
    <rect x="90" y="11.9" width="10.2" height="9.8" fill="#e3e3e5"/>
    <g fill="#e3e3e5"><rect x="84.5" y="6.2" width="2.4" height="2.4" rx="0.8"/><rect x="93.6" y="6.2" width="2.4" height="2.4" rx="0.8"/><rect x="84.5" y="15.4" width="2.4" height="2.4" rx="0.8"/><rect x="88.8" y="10.7" width="2.4" height="2.4" rx="0.8"/><rect x="99" y="10.7" width="2.4" height="2.4" rx="0.8"/><rect x="88.8" y="20.5" width="2.4" height="2.4" rx="0.8"/><rect x="99" y="20.5" width="2.4" height="2.4" rx="0.8"/></g>
  </g>
  <g stroke="#4a545c" stroke-width="1.1">
    <rect x="157" y="6.2" width="11.6" height="14.4" rx="1"/>
    <rect x="161.4" y="8.1" width="11.2" height="14.6" rx="1" fill="#e3e3e5"/>
    <path d="M166.5 10.2L167.9 13.8L171.4 14L168.6 16.3L169.7 19.7L166.5 17.7L163.3 19.7L164.4 16.3L161.6 14L165.1 13.8Z" stroke-width="0.9" stroke-linejoin="round"/>
    <path d="M223 7.4H237.8M227.5 7.4C227.5 5.5 233.5 5.5 233.5 7.4" stroke-width="0.9" stroke="#7a8088"/>
    <path d="M224.4 9.1H236.7V21.8C236.7 22.3 236.3 22.6 235.8 22.6H225.3C224.8 22.6 224.4 22.3 224.4 21.8Z"/>
    <path d="M227.7 11.5V19.5M230.5 11.5V19.5M233.4 11.5V19.5" stroke-width="0.9"/>
  </g>
</svg>
<div class="pt" style="left:1274px;top:99px;font-size:10px;color:#c0c0c2">Group</div>
<div class="pt" style="left:1332px;top:99px;font-size:10px;color:#c0c0c2">UnGroup</div>
<div class="pt" style="left:1402px;top:99px;font-size:10px;letter-spacing:-0.05px;-webkit-text-stroke:0.3px #3c4650">Duplicate</div>
<div class="pt" style="left:1475px;top:99px;font-size:10px;letter-spacing:-0.1px;-webkit-text-stroke:0.3px #3c4650">Delete</div>

<!-- layers list -->
<div class="abs" style="left:1258px;top:117px;width:243px;height:76px;background:#e3e3e5"></div>
<div class="abs" style="left:1258px;top:193px;width:243px;height:1px;background:#bcbcbe"></div>
<div class="abs" style="left:1258px;top:271px;width:243px;height:1px;background:#bcbcbe"></div>
<div class="abs" style="left:1501px;top:117px;width:17px;height:663px;background:#f1f1f1"></div>
<svg class="abs" style="left:1501px;top:117px" width="17" height="663"><path d="M4.5 11.5H12.5L8.5 7.5Z" fill="#a3a3a3"/><path d="M4.5 653.5H12.5L8.5 657.5Z" fill="#a3a3a3"/></svg>
<svg class="abs" style="left:1258px;top:117px" width="243" height="160">
  <path d="M10 12.5H18.2L14.1 17.2Z" fill="#3c4650"/>
  <path d="M10 89.5H18.2L14.1 94.2Z" fill="#3c4650"/>
  <g transform="translate(214 10.4)">
    <path d="M0 6C3.5 0.5 10.5 0.5 14 6C10.5 11.5 3.5 11.5 0 6Z" fill="none" stroke="#3c4650" stroke-width="1.5"/>
    <circle cx="7" cy="5.3" r="3.4" fill="#3c4650"/>
    <circle cx="6.3" cy="4.2" r="1" fill="#fff"/>
  </g>
  <g transform="translate(214 87.4)">
    <path d="M0 6C3.5 0.5 10.5 0.5 14 6C10.5 11.5 3.5 11.5 0 6Z" fill="none" stroke="#3c4650" stroke-width="1.5"/>
    <circle cx="7" cy="5.3" r="3.4" fill="#3c4650"/>
    <circle cx="6.3" cy="4.2" r="1" fill="#fff"/>
  </g>
  <rect x="30" y="114" width="30" height="30" fill="#474747"/>
</svg>
<div class="pt" style="left:1286px;top:124px;font-size:14px;letter-spacing:-0.15px">Flowers and Leaves Draw</div>
<div class="pt" style="left:1328px;top:163px;font-size:12px;letter-spacing:-0.3px">Draw</div>
<div class="pt" style="left:1286px;top:201px;font-size:14px;letter-spacing:-0.3px">Square</div>
<div class="pt" style="left:1328px;top:240px;font-size:12px">Cut</div>
<svg class="abs" style="left:1287px;top:153px" width="32" height="32"><g transform="translate(0.6 0.7) scale(0.0756) translate(-264 -259)"><path d="M319 270.4C330 263 345 262 353.4 262.7C362 262.5 368 264 371.9 266.3C384 272 391 280 393.5 290C396 300 396 308 395 314.6C396 318 399 320 402.8 321.8M319 270.4C318.5 276 319 280 320.6 283.8C323 291 326 296 329.8 300.2C333 304 336 307.5 340.1 310.5M319 272C326 277 333 282 341.1 288.9C348 295 355 300 361.7 304.3C367 307 372 307.5 377 307.4M319 270.4C327 271 335 272.5 343.2 275.5C352 279 360 284 366.8 288.9M352.4 262.7C358 266 361 271 363.7 277.6C366 284 369 290 371.9 296.1C374 300 376 304 378.1 307.4C382 311 385 314 389.4 316.6M370.9 269.4C380 276 388 287 392.5 298.2M376 281.2C383 290 389 300 393.5 309.5M379.1 297.1C383 303 386 308 389.4 312.6M322.5 282L323.6 290M326 286L327.7 295M329.5 290L331 299M333.5 294L335 304M337.5 298L339 309M333.4 317.7C337 312 342 309 346.2 307.4C351 306 356 305.5 361.7 305.9C367 306 373 306.5 378.1 307.4C382 309 386 312 389.4 315.6M333.4 317.7C336 320 340 322 343.2 322.8C349 326 354 329 359.6 330C364 331 369 331 374 330.5C380 329 385 326 390.4 322.8C394 322 398 324 401.7 327M343.2 314.6C349 313 355 312.5 361.7 312.6C370 313 379 314.5 387.4 316.6M351.4 320.8C358 322 365 323.5 371.9 323.9C377 324 382 322.5 386.3 320.8M420 261.2C417 266 415.5 272 415.4 277.6C415 283 415.5 288 416.4 293C418 298 420 302 422.6 306.4C425 310 428 312.5 430.8 314.6M420 261.2C423 261.5 426 262 428.8 263.2C432 265 436 268 439 270.4C441 268.5 444 267 446.2 266.8C448 266.5 449.5 267 450.3 267.8C451.5 269.5 452 271.5 452.4 273.5C455 277 458 281 459.6 284.8C461 289 462 293 461.7 296.1C461.5 300 460.8 303 459.6 305.4C457.5 307.5 455.5 309 453.4 310.5M420.5 264.2C421.5 269 422 274 421.6 278.6C421 282 420.3 284.5 419.5 286.9M418.5 266.3C417.5 272 417.2 279 417.5 285.8M423.6 280.7C426 277 430 275 433.9 273.5C435.5 272.5 437 272 439 271.4M419 294C418.8 296 419 298 419.5 300.2C421 303.5 423 307 425.7 310.5C427.5 312 429.5 313.5 431.9 314.6M430.3 280.7C430 286 430.2 291 430.8 296.1C431.5 301 432.5 305.5 433.9 309.5M440.6 279.1C438 284 436.5 290 436 296.1C435.8 301 436.2 305.5 437 309.5M447.8 288.9C445.5 292 444 295.5 443.2 299.2C442.2 303 441.5 306 441.1 309.5M419.5 300.2C424 304 430 308 436 310.5M448.3 305.4C446 307 443.5 309 441.1 310.5M439 312.5C443 313.5 447 315 451.4 316.6M451.4 268.4C454 266 457.5 264.5 461.7 263.7C466 263 472 263.5 477.1 264.2C482 265 486.5 266 490.4 267.8C494 270 497 272.5 498.6 275.5C500 279 500.3 282 499.7 284.8C499 289.5 497.5 294 495.6 298.2C493 302 490.5 305.5 487.3 308.4C483 312 478.5 315 474 317.7C470 319.5 466 321.5 461.7 322.8C458 324 454.5 325.5 451.4 325.9C449 325.5 447 324.8 445.2 323.9C443 322.5 441 320.5 439 318.7M491.4 268.4C485 267.5 478.5 267 471.9 267.3C466 268.5 460.5 270.5 455.5 272.5M491.4 268.4C486 271.5 480 274.5 474 277.6C469 280 464.5 282.5 460.6 284.8M496.6 272.5C494 276 490.5 280 487.3 283.8C479 289 470.5 293 461.7 296.1M497.6 290C493 293.5 488.5 297 484.3 300.2C475 304 466 307 457.5 309.5M450.3 311.5C454 312.5 458 313.2 461.7 313.6C468 314.3 474 314.8 480.1 315.1M456 268.5L458.5 272M461 276L463.5 280M465 290L467 293.5M469 290L471 293M465 299V303.5M468.5 299V303M472 299V302.5M458 310V313M462 310.5V314M466 311V314.5M470 311V315M474 311V314.5M479.5 310V313.5M433.9 310.5C432.5 313 431.5 316 430.8 318.7C430.3 320.5 430 322.5 429.8 324.9M440.1 309.5C438 312.5 436 315.5 434.9 318.7C434 321 433.3 324 432.9 326.9M445.2 322.8C443.5 326 442 329.5 441.1 333.1C440.7 337 440.5 341 440.6 345M400 319.7C402.5 321 405 322.2 407.2 322.8C409.5 322.5 411.5 322 413.4 321.8C417.5 321.8 421.5 322 425.7 322.8C428.5 324.5 431 326.5 432.9 329C433.5 331 433.8 333 433.9 335.1M419.5 324.9C424 327.5 429 331 432.9 334.1M403.1 333.1C413 333.5 422 334 431.9 335.1M501.3 335.4C503 330 505 325 508.1 320.5C512 317 516 314.5 520.7 312.6C526 311 531 310.5 536.6 310.8C539 311 541.5 312 543.5 313.1C545 315 546 317.5 546.9 320M502.4 343.4C502.5 340.5 503 338 503.5 335.4C508 330 512.5 325.5 517.2 321.7C520 321.3 522.5 321.5 525.2 321.7C530 318.5 535 315.5 540.1 313.1M507 334.2C512 340 518 346 523 351.4M512.7 329.7C517 336 521 343 525.2 350.2M517.2 324C521 332 524.5 340 527.5 348M525.2 322.8C526 327 527 332 527.5 336.5M533.2 316C533 323 532.5 330 532.1 337.7M541.2 314.8C539.5 322 538 330 536.6 338.8M546.9 320C549.5 318.5 552 318 554.9 317.7C558.5 317 562.5 316.5 566.3 316.6C570 317.5 574 318.8 577.7 320.5C580 321.5 582.5 322.5 584.6 324C587 327 588.5 330.5 589.2 334.2C589.8 337 590 339.5 590.3 342.2C592 344.5 594 346.5 594.9 349.1C595.5 352 595.6 354.5 595.4 357.1C594.5 359.5 593 362 591.4 363.9C588.5 366 585.5 367.5 582.3 368.5C578 369.3 573 369.7 568.6 369.6C564 369.2 559.5 368.5 554.9 367.4C552.5 366.5 550 365.3 548.1 363.9M537.8 337.7C541 333 544.5 328.5 548.1 324M541.2 338.8C546 333.5 551.5 328.5 557.2 324M545.8 341.1C553 335 560.5 329.5 568.6 325.1M550.3 343.4C559.5 338.5 569 334 578.9 330.8M554.9 345.7C558 344.8 561 344 564 343.4M566.3 341.1C572.5 340 579 339.5 585.7 339.4M556 349.1C558.3 348.5 560.5 348.2 562.9 347.9M575 346.2h1.2M585.2 346.2h1.2M571.5 352.7h1.2M565.5 359.6h1.2M577 360.7h1.2M517 378h0.8M527.5 377h0.8M533 388h0.8M528 343L531 345L533 341L536 344L539 340L541 344L545 342L546 346L550 345L549 349L553 350L551 354L554 357L550 359L553 363L549 364L550 368L546 367L545 371L541 369L538 373L535 369L531 371L530 367L526 368L527 364L522 363L525 360L521 357L525 355L522 351L526 350L524 346ZM526 355L531 353L534 357L539 354M530 362L534 359L538 362L543 358M538 349L537 354L540 357M544 352L547 356M528 366L532 368M507 347.9C504.5 350.5 503 353.5 502.4 357.1C502 363 502.5 368.5 503.5 374.2C505 379.5 507 384.5 509.2 389C511 391.5 513 393.8 515 395.9M548.1 363.9C551 364 554 364.5 557 365C565 367 573 368.5 580 369.6C583 372.5 585.5 376 586.9 379.9C587.5 383 587.6 386 587.4 389C586.5 392 585 394.5 583.4 397M568.6 374.2C574 375.5 579.5 377 584.6 378.8M566.3 382.2C572.5 384.5 579 386.8 585.7 389M559.5 384.5C564.5 388.5 569.5 392.5 574.3 397M543.5 382.2C545.5 385.5 547.5 389.5 549.2 393.6M540.1 373.1C540 382 540 391 540.1 400M542.4 373.1C542.5 382 542.5 391 542.4 400M483.6 350.2C484.5 346 485.8 342.5 487.6 338.8C488.5 336.5 489.5 334.5 491 333.1C493.5 333 495.8 333.5 497.8 334.2C499.5 335.3 501 336.5 502.4 337.7M483.6 350.2C483.8 352.5 484.3 355 485.3 357.1C486.8 358.5 488.3 359.4 489.8 359.9C493 359.7 496 359 499 358.2M489.8 338.8C492 345 494.5 351 496.7 357.1M495.5 340C497 345.5 498.5 351 500.1 357.1M484.1 349.1C487.5 351.5 491 354.5 494.4 357.1M366.4 352.7C362 355 358.5 357.5 355.5 360.7C352.5 364 350.5 367.5 348.7 370.9C347 375 346 379 345.3 383.5C345.3 387 345.7 390.5 346.4 393.8C347.5 397 348.5 400 349.8 402.9C353 405 356.5 407 360.1 408.6C364.5 410.3 369 411.3 373.8 412C378.5 412.3 383.5 412.3 388.7 412C392.5 409.5 396 407 398.9 404C401.5 400 403.5 395 404.6 390.3C405.3 386.5 405.6 382.5 405.8 378.9C406.8 375.5 408 372 409.2 368.7C410.7 365 412.5 361.5 413.8 358.4C414.3 356 414.7 353.5 414.9 351.5M369.2 356.1C365 359 361 362.5 357.8 366.4C355.3 370 353.5 374 352.1 377.8C350.5 381 349 384.5 348.1 388.1C348 392.5 348.5 396.5 349.3 400.6M357.8 406.3C363.5 406.5 369.5 406 375 405.2C382 402.5 389 399 395.5 394.9C398.5 392.5 401 390.5 403.5 388.1M363 372.1C360 378 357 385 354.4 391.5M385.2 368.7C381 373.5 376.5 378.5 372.7 383.5C368.5 388 365 392.5 361.3 397.2M397.8 369.8C396.5 375 394.5 380.5 392.1 385.8C385 391 377 396 369.2 400.6M400.1 368.7C401.5 372.5 403 376.5 404.6 380.1M366.4 352.7C367.5 354.5 368.3 356 369.2 357.2C373 357.8 377 358.2 380.7 358.4C381.5 360 382.2 361.5 382.9 363C384.5 364.5 386 366 387.5 367.5C392 368 396.5 368.5 401.2 368.7C402.8 367.8 404.5 366.5 405.8 365.2C406.8 362.5 407.5 360 408.1 357.2C408.5 355 408.9 352.5 409.2 350.4M366.4 352.7C369 351 372 349.5 375 348.1C378.5 345 382 342 385.2 339C386.8 338.5 388.3 338 389.8 337.8M380.7 358.4C381 356 381.3 353.5 381.8 351.5C383.2 350.3 384.8 349.2 386.4 348.1C390.5 349 394.5 349.8 398.9 350.4C402.5 350.2 406.5 349.8 410.3 349.2C412.8 346.5 415 343.5 417.2 340.1M386.4 349.2C385.8 346.5 385.3 344 385.2 341.3C386 340.5 386.8 339.7 387.5 339M396.6 351.5C394 355 391.5 359 389.8 363M411.5 350.4C412.8 353 414 355.5 414.9 358.4C415.5 361.5 415.8 364.5 416 367.5C419 365 421.8 362 424 359.5C425.2 356 426 352.5 426.3 349.2C426.2 345.5 425.8 342 425.2 339M422.9 341.3C422 344.5 421 348 420 351.5M393.2 332.1C395 330.5 397 329 398.9 327.6C402 325.5 405 323.5 408.1 321.8C412.5 321.5 417 321.8 421.8 322.4C425 324.5 429 326.5 432 328.7C432.6 331 433 333 433.2 335.5M393.2 332.1C395 333.5 397 334.5 398.9 335.5C404 337 409.5 338 414.9 339C420 338.8 425 338.3 429.7 337.8C431.3 338.8 433 340 434.3 341.3M402.4 332.7C406.5 331.8 410.5 331.2 414.9 331C421 331.8 427 333.2 433.2 335M419.5 325.3C424 327.5 428 329.8 432 332.1M434.3 341.3C434.8 346 435.2 350.5 435.5 355C435.8 361.5 436 368 436 374.4M442.3 324.1C441.2 327.8 440.5 331.5 440 335.5C440.2 342 440.4 348.5 440.6 355C441 359.5 441.7 364 442.3 368.7M544.3 427.8C545.5 423.5 547.5 419.5 550 416.4C553 413.5 556.5 412 560 411.4C565 410.8 569.5 410.5 574.3 410.7C579.5 411.8 584.5 413 588.6 415C591.5 417.2 594.5 419.5 597.1 422.1C599.5 424.5 602 427 604.3 429.3C604 431.8 603.6 434 602.9 436.4C600.3 438.5 597.3 440.3 594.3 442.1C590.5 444.5 586.8 447 582.9 449.3C578 451 573.3 452.5 568.6 453.6C564.8 453.2 561 452.7 557.1 452.1C554 449.5 551 446.5 548.6 443.6C546.8 440.5 545.3 437 544.3 433.6C544.2 431.5 544.2 429.5 544.3 427.8M588.6 419.3C590 423 591 427 591.4 430.7C590.8 433.5 589.8 436.5 588.6 439.3M598.6 423.6C599.2 426.5 599.7 429.3 600 432.1C598.5 435.5 596.5 439 594.3 442.1M547.1 423.6C553.5 422.3 560 421.5 567.1 421.4M545.7 429.3C557 428.5 568.5 428 580 427.9M547.1 436.4C558.5 434.5 570 433 581.4 432.1M550 442.1C556.5 441.8 563 441.5 570 441.4M554.3 449.3C558.5 449.5 562.8 449.8 567.1 450M602.9 449.3C605.8 448.8 608.5 448.6 611.4 448.6C616 449 621 449.7 625.7 450.7C628.3 452.5 630.7 454.5 632.9 456.4C633.8 458 634.7 459.4 635.7 460.7C638.8 461.7 641.5 462.5 644.3 463.6C646.5 465.8 648.4 468.3 650 470.7C650 473 650 475.5 650 477.9C651.5 481.3 653 484.5 654.3 487.9C654.5 491.7 654.5 495.5 654.3 499.3C652.5 501.3 650.5 503.3 648.6 505C644.3 506 640 507 635.7 507.9C632.3 509.8 629 511.8 625.7 513.6C623.3 514.6 621 515.5 618.6 516.4C615.3 514.5 612 512.6 608.6 510.7C606.8 510.2 604.8 509.8 602.9 509.3C599 510.8 595.3 512.3 591.4 513.6C587.5 511.7 583.8 509.8 580 507.9C576.2 508.3 572.4 508.8 568.6 509.3M592.9 493.6C602 490 611.5 486.5 621.4 483.6M597.1 495C606 493.3 615 491.8 624.3 490.7M608.6 495C618.5 494.8 628.5 494.5 638.6 494.3M624.3 475C625.8 472.8 627.2 470.7 628.6 468.6M582.9 486.4C590 482 597 477.5 604.3 473.6M584.3 489.3C591 485.5 597.5 481.5 604.3 477.9M586 480C592 476.5 598 473 603 470M547.1 452.1C548.8 456 550.3 459.7 551.4 463.6C552.8 468.3 553.8 473 554.3 477.9C553.5 480.5 552.5 482.8 551.4 485C549.5 485.5 547.6 486 545.7 486.4M557.1 455C562.5 459 567.5 463.5 572.9 467.9M580 453.6C581 463.5 582 473.5 582.9 483.6M585.7 453.6C586.8 459.8 587.8 466 588.6 472.1M591.4 463.6V472.1M602.9 449.3C604 452.7 605 456 605.7 459.3C604 462.7 602 466 600 469.3C595.5 474 590.5 478.8 585.7 483.6M596 455L601 465M593 460L599 469M538.6 413.6C535.3 414.8 532 416.3 528.6 417.9C525.3 420.3 521.8 422.5 518.6 425C516.5 429.3 514.5 433.5 512.9 437.9C513.5 440.8 514.5 443.5 515.7 446.4C519 446.9 522.3 447.4 525.7 447.9C529.5 446.5 533.3 445 537.1 443.6C539.5 444.5 542 445.5 544.3 446.4C545.8 447.3 547.2 448.3 548.6 449.3M538.6 413.6C538 418 537.5 422 537.1 426.4C536.3 430.3 535.3 434 534.3 437.9C532.8 439.8 531.3 441.7 530 443.6M515.7 437.9C520.5 432.6 525.3 427.3 530 422.1M517.1 442.1C522.3 437.3 527.5 432.5 532.9 427.9M520 446C524.5 441.5 529 437 533.5 432.5M513 432C518 427 523 422.5 527 419M512.9 452.1C513.3 457 513.8 461.7 514.3 466.4C516.5 470.3 519 474 521.4 477.9C523.8 478.8 526.2 479.8 528.6 480.7C532.4 479.8 536.2 478.8 540 477.9C542 475 543.8 472.3 545.7 469.3C546.3 465.5 546.8 461.7 547.1 457.9M518.6 455C519.5 461.7 520.5 468.3 521.4 475M525.7 456.4C525.5 463.5 525.3 470.7 525 477.9M532.9 456.4C532.6 458.8 532.3 461.2 532.1 463.6M515.7 520C515.5 511.7 515.5 503.3 515.7 495C517.5 491.7 519.5 488.3 521.4 485C524.7 483.5 528 482 531.4 480.7C535.2 481.7 539 482.7 542.9 483.6C545 487.4 547 491.2 548.6 495C548.8 499.8 548.8 504.5 548.6 509.3C547.8 512.8 546.8 516.4 545.7 520M521.4 492.1C522.5 497.3 523.4 502.6 524.3 507.9M530 483.6C530.5 496 531 508 531.4 520M537.1 483.6C538.2 489.3 539.2 495 540 500.7M542.9 487.9C543.4 497.3 543.9 506.8 544.3 516.4M517 497L520 500M516.5 503L520.5 507M516.5 509L521 514M517 515L520 519M548.6 503.6C555 505.5 561 507.3 567.1 509.3M549 509C556 511 563 512.8 570 514.5M548 514C554 515.5 560 517 566 518.5M500 429.3C502.8 430.2 505.7 431 508.6 432.1C510.5 431.3 512.4 430.3 514.3 429.3M500 483.6C503.8 472 507.5 460.5 511.4 449.3M316.8 512.1C317.1 510.4 317.6 505.0 318.5 502.0C319.4 499.0 320.6 496.3 322.0 494.0C323.4 491.7 325.6 489.3 327.0 488.0C328.4 486.7 329.2 486.9 330.5 486.0C331.8 485.1 333.9 483.2 334.6 482.6M339.0 479.5C339.6 479.1 341.5 478.1 342.8 477.1C344.1 476.1 346.2 474.3 346.9 473.7M346.9 473.7C347.6 473.5 349.6 472.6 351.0 472.3C352.4 472.0 353.8 471.9 355.2 472.0C356.6 472.1 358.1 472.4 359.5 472.8C360.9 473.2 362.8 474.1 363.4 474.4M363.4 474.4C363.9 473.8 365.4 471.4 366.5 470.5C367.6 469.6 368.4 469.4 370.2 468.9C372.0 468.4 375.1 467.5 377.1 467.5C379.2 467.5 381.6 468.7 382.5 468.9M382.5 468.9C383.0 467.9 384.2 464.6 385.3 463.0C386.4 461.4 387.6 460.3 389.0 459.5C390.4 458.7 391.9 458.1 393.5 458.0C395.1 457.9 396.9 458.1 398.5 458.8C400.1 459.5 402.3 461.6 403.1 462.1M403.1 462.1C403.8 461.7 405.7 459.9 407.2 459.5C408.7 459.1 411.2 459.9 412.0 460.0M363.4 474.4C364.2 475.0 366.5 476.6 368.0 478.0C369.5 479.4 371.0 481.0 372.5 482.5C374.0 484.0 375.6 485.4 377.0 487.0C378.4 488.6 380.5 491.3 381.2 492.2M382.5 468.9C383.2 469.4 385.4 470.6 387.0 472.0C388.6 473.4 390.6 475.3 392.1 477.1C393.6 478.9 394.7 480.9 395.8 483.0C396.9 485.1 398.5 488.4 399.0 489.5M403.1 462.1C402.9 462.9 402.0 465.4 401.8 467.0C401.6 468.6 401.5 469.8 401.7 471.6C401.9 473.4 402.3 475.9 402.8 478.0C403.3 480.1 404.2 483.0 404.5 484.0M316.8 512.1C317.2 510.6 318.1 505.4 319.0 503.0C319.9 500.6 321.1 499.2 322.3 497.7C323.6 496.2 325.1 494.9 326.5 494.0C327.9 493.1 329.2 492.6 330.5 492.2C331.8 491.8 332.9 491.4 334.0 491.3C335.1 491.2 336.3 490.9 337.3 491.5C338.3 492.1 339.5 493.5 340.1 494.9C340.7 496.3 340.6 498.2 340.8 500.0C341.0 501.8 341.1 504.3 341.5 505.9C341.9 507.5 342.5 508.6 343.2 509.5C343.9 510.4 344.7 511.4 345.6 511.4C346.5 511.4 347.6 510.4 348.5 509.5C349.4 508.6 350.2 507.3 351.0 505.9C351.8 504.5 352.3 502.6 353.0 501.0C353.7 499.4 354.4 497.4 355.2 496.3C355.9 495.2 356.8 494.9 357.5 494.5C358.2 494.1 358.6 494.1 359.3 494.2C360.0 494.2 360.8 494.4 361.5 494.8C362.2 495.2 362.8 495.5 363.4 496.3C363.9 497.1 364.4 498.4 364.8 499.5C365.2 500.6 365.5 502.2 366.1 503.2C366.7 504.2 367.6 504.9 368.5 505.3C369.4 505.8 371.1 505.8 371.6 505.9M320.0 509.0C320.8 508.2 323.2 505.7 325.0 504.0C326.8 502.3 329.0 500.4 331.0 499.0C333.0 497.6 336.0 496.1 337.0 495.5M321.0 510.0C321.8 509.4 324.2 507.7 326.0 506.5C327.8 505.3 329.8 504.1 332.0 503.0C334.2 501.9 337.8 500.5 339.0 500.0M322.0 511.0C322.8 510.6 325.2 509.3 327.0 508.5C328.8 507.7 330.8 506.8 333.0 506.0C335.2 505.2 338.8 504.3 340.0 504.0M353.0 506.0C353.7 505.4 355.7 503.6 357.0 502.5C358.3 501.4 359.8 500.2 361.0 499.5C362.2 498.8 363.5 498.2 364.0 498.0M354.0 508.0C354.8 507.7 357.0 506.6 358.5 506.0C360.0 505.4 361.6 504.9 363.0 504.5C364.4 504.1 366.3 503.7 367.0 503.5M352.5 503.0C353.0 502.5 354.5 500.9 355.5 500.0C356.5 499.1 357.5 498.2 358.5 497.5C359.5 496.8 361.0 496.2 361.5 496.0M318.2 512.1C319.7 511.7 324.1 510.4 327.0 509.5C329.9 508.6 332.6 507.8 335.5 507.0C338.4 506.2 341.8 504.8 344.2 504.5C346.6 504.2 348.2 505.1 350.0 505.5C351.8 505.9 353.2 506.5 355.0 507.0C356.8 507.5 358.4 508.6 360.6 508.6C362.8 508.6 365.6 507.5 368.0 507.0C370.4 506.5 372.6 505.9 375.0 505.5C377.4 505.1 380.3 504.5 382.5 504.5C384.7 504.5 386.2 505.1 388.0 505.5C389.8 505.9 391.7 506.5 393.5 507.0C395.3 507.5 397.1 507.9 399.0 508.6C400.9 509.3 402.8 510.1 405.0 511.0C407.2 511.9 410.8 513.6 412.0 514.1M349.7 484.0C350.5 484.4 352.8 485.8 354.3 486.7C355.8 487.6 357.3 488.6 358.8 489.5C360.3 490.4 362.6 491.8 363.4 492.2M355.2 482.6C356.1 483.1 358.8 484.7 360.6 485.8C362.4 486.9 364.4 487.9 366.2 489.0C368.0 490.1 370.7 491.7 371.6 492.2M390.8 468.9C391.2 469.8 392.6 472.3 393.5 474.0C394.4 475.7 395.4 477.3 396.3 479.0C397.2 480.7 398.6 483.2 399.0 484.0M394.0 468.0C394.4 468.7 395.8 470.7 396.5 472.0C397.2 473.3 397.8 474.7 398.5 476.0C399.2 477.3 400.2 479.3 400.5 480.0M384 496L390 503M387.5 494L395 503M391 492.5L399 503.5M395 492L403 505M399 492L407 506M403 493.5L410 507M299.0 530.0C299.8 529.3 302.4 527.3 304.0 526.0C305.6 524.7 307.2 523.4 308.6 522.3C310.1 521.2 311.8 520.5 312.7 519.6C313.6 518.7 313.3 517.1 314.0 516.8C314.7 516.4 316.1 517.0 317.0 517.5C317.9 518.0 318.2 518.6 319.5 519.6C320.8 520.6 323.2 522.1 325.0 523.5C326.8 524.9 329.1 528.0 330.5 527.8C331.9 527.6 332.0 523.5 333.2 522.3C334.4 521.1 336.1 521.0 337.5 520.5C338.9 520.0 340.2 519.6 341.5 519.6C342.8 519.6 344.1 520.0 345.5 520.5C346.9 521.0 349.0 522.0 349.7 522.3M344.2 527.8C345.3 527.2 348.7 525.5 351.0 524.5C353.3 523.5 355.8 521.9 357.9 521.6C360.0 521.3 361.7 522.1 363.5 522.5C365.3 522.9 367.6 523.0 368.8 523.7C370.0 524.4 370.0 525.5 370.5 526.5C371.0 527.5 371.4 529.4 371.6 530.0M364.7 519.6C365.0 518.8 365.7 516.4 366.5 515.0C367.3 513.6 368.2 512.5 369.5 511.5C370.8 510.5 372.5 509.5 374.0 509.0C375.5 508.5 376.6 508.4 378.4 508.6C380.2 508.9 382.9 509.6 385.0 510.5C387.1 511.4 389.1 512.3 390.8 514.1C392.6 515.9 394.1 518.9 395.5 521.5C396.9 524.1 398.4 528.6 399.0 530.0M336.0 527.0C336.7 526.7 338.7 525.6 340.0 525.0C341.3 524.4 342.7 523.9 344.0 523.5C345.3 523.1 347.3 522.7 348.0 522.5M337.0 530.0C337.7 529.8 339.7 529.0 341.0 528.5C342.3 528.0 343.7 527.4 345.0 527.0C346.3 526.6 348.3 526.2 349.0 526.0M433.0 403.0C433.0 404.9 432.4 410.9 433.0 414.4C433.6 417.9 434.8 421.2 436.9 424.1C439.0 427.0 442.5 430.3 445.6 431.9C448.7 433.5 451.9 433.6 455.3 433.8C458.7 434.0 463.2 433.9 466.0 432.8C468.8 431.7 470.0 429.3 471.8 427.0C473.6 424.7 475.6 421.6 476.6 419.2C477.6 416.8 477.9 415.1 477.6 412.5C477.3 409.9 475.8 406.3 474.7 403.7C473.6 401.1 471.4 398.0 470.8 396.9M450.4 403.7C450.2 405.5 449.5 410.3 449.5 414.4C449.5 418.4 450.2 425.7 450.4 428.0M459.2 400.8C459.7 402.8 462.0 408.4 462.1 412.5C462.2 416.6 460.4 423.0 460.1 425.1M455.8 414.5v1.5M455.5 419.5v1.5M455 426.5v1.5M411.6 395.0C411.5 396.5 411.0 401.1 411.0 404.0C411.0 406.9 410.9 410.2 411.6 412.5C412.3 414.8 413.7 416.2 415.0 418.0C416.3 419.8 417.5 421.6 419.4 423.1C421.3 424.6 423.3 426.8 426.2 427.0C429.1 427.2 435.1 424.6 436.9 424.1M421.3 403.7C421.8 402.9 423.0 400.4 424.0 399.0C425.0 397.6 426.7 395.7 427.2 395.0M429.1 402.8C429.8 402.1 431.9 399.8 433.5 398.5C435.1 397.2 437.9 395.6 438.8 395.0M493.1 409.5C493.2 408.2 493.6 404.4 493.8 402.0C494.0 399.6 494.1 396.2 494.1 395.0M493.1 409.5C492.5 410.4 490.6 413.2 489.5 415.0C488.4 416.8 487.6 419.2 486.3 420.2C485.1 421.2 483.4 420.8 482.0 421.0C480.6 421.2 478.3 421.2 477.6 421.2M500.9 414.4C501.3 412.8 502.5 408.2 503.5 405.0C504.5 401.8 506.2 396.7 506.7 395.0M500.9 414.4C500.2 413.8 498.3 411.8 497.0 410.5C495.7 409.2 493.8 407.2 493.1 406.6M437.8 425.1C437.9 427.6 438.3 435.3 438.5 440.0C438.7 444.7 438.8 447.8 438.8 453.2C438.9 458.6 438.8 469.4 438.8 472.6M446.1 432.8C446.2 436.2 446.4 446.2 446.6 453.2C446.8 460.1 447.4 470.9 447.5 474.5M460.1 433.8C460.0 437.5 459.6 448.3 459.5 456.0C459.4 463.7 459.2 476.0 459.2 480.0M467.9 432.8C467.8 436.7 467.3 448.1 467.0 456.0C466.7 463.9 466.2 476.0 466.0 480.0M485.4 420.2C484.9 422.8 483.5 430.5 482.5 436.0C481.5 441.5 480.3 448.2 479.5 453.2C478.7 458.2 478.1 461.5 477.5 466.0C476.9 470.5 476.0 477.7 475.7 480.0M493.1 412.5C492.8 414.6 492.0 420.6 491.5 425.0C491.0 429.4 490.8 432.9 490.2 438.6C489.6 444.3 488.8 452.1 488.0 459.0C487.2 465.9 485.8 476.5 485.4 480.0M439 432L446 427M439 437L446.2 432M439 442L446.3 437M439 447L446.4 442M439 452L446.5 447M440 456L446.5 452M461 439L467.5 434M460.5 444L467.3 439M460.3 449L467 444M460 454L466.8 449M484.5 424L491.5 417M483.5 430L491 423M482.5 436L490.5 429M481.5 442L490 436M480.5 448L489 443M480 453L487 449M446.6 447.4C446.8 447.2 447.4 446.5 448.0 446.0C448.6 445.5 448.7 445.6 450.4 444.5C452.1 443.4 455.3 440.9 458.2 439.6C461.1 438.3 464.7 437.5 467.9 436.7C471.1 435.9 475.0 435.6 477.6 434.8C480.2 434.0 482.4 432.4 483.4 431.9M450.4 444.5C450.1 444.9 448.7 446.3 448.5 447.0C448.3 447.7 447.9 448.3 449.0 448.5C450.1 448.7 454.2 448.3 455.3 448.3M492.1 431.9C493.7 431.7 498.8 430.9 501.8 430.9C504.8 430.9 508.6 431.7 510.0 431.9M487 444.5L488.5 447M476.5 450.5L478 452.5M495.5 444L497 449M447.5 464.3C448.6 464.6 452.2 465.1 454.3 465.8C456.4 466.5 459.1 468.2 460.1 468.7M466.0 466.8C467.0 466.5 470.1 465.6 472.0 465.0C473.9 464.4 476.7 463.2 477.6 462.9M486.3 459.0C486.9 459.4 488.9 460.5 490.0 461.5C491.1 462.5 491.9 463.6 493.1 464.8C494.3 466.0 496.4 468.1 497.0 468.7M448 468L453 474M449 466L456 473M452 466L459 472M455 467L459.5 471M467 470L472 466M468 473.5L475 468M470 476L477 470M488 464L493 468M487 467.5L492 472M486 471L490.5 475M400.0 461.0C401.0 460.8 403.5 460.2 405.8 460.0C408.1 459.8 411.2 458.7 413.6 459.5C416.0 460.3 418.9 462.6 420.4 464.8C421.8 467.0 421.5 470.5 422.3 472.6C423.1 474.7 424.7 476.6 425.2 477.4M424.2 466.8C424.5 465.3 425.2 460.1 426.2 458.0C427.2 455.9 428.4 455.1 430.0 454.0C431.6 452.9 434.4 451.1 435.9 451.3C437.4 451.5 438.3 454.5 438.8 455.1M429.1 466.8L432.0 462.9M432.0 468.7L435.9 463.9M431.0 470.5L435.0 466.0M432.0 477.4C433.1 476.8 436.9 473.8 438.8 473.6C440.7 473.5 442.8 476.0 443.6 476.5M404 466L406 474M408 465L410 475M412 466L414 476M314.1 516.9C313.0 517.5 310.3 518.2 307.7 520.6C305.1 523.0 301.9 529.1 298.5 531.5C295.1 533.9 290.6 533.4 287.6 535.2C284.6 537.0 282.0 540.1 280.3 542.5C278.6 544.9 278.7 547.1 277.5 549.8C276.3 552.5 274.4 554.9 273.0 558.9C271.6 562.9 270.4 569.9 269.3 573.5C268.2 577.1 267.1 577.1 266.6 580.8C266.2 584.5 265.9 591.5 266.6 595.5C267.4 599.5 267.3 602.6 271.1 604.6C274.9 606.6 284.8 607.6 289.4 607.3C294.0 607.0 294.9 604.5 298.5 602.8C302.1 601.1 306.9 598.8 311.3 597.3C315.7 595.8 322.7 594.2 325.0 593.6M314.1 516.9C315.4 517.8 319.1 520.2 322.0 522.0C324.9 523.8 329.2 527.8 331.4 527.9C333.6 528.0 332.7 523.8 335.1 522.4C337.5 521.0 343.6 519.7 346.0 519.7C348.4 519.7 349.1 522.0 349.7 522.4M305.8 537.9C307.6 539.0 313.8 541.4 316.8 544.3C319.9 547.2 322.6 550.1 324.1 555.3C325.6 560.5 325.9 569.0 325.9 575.4C325.9 581.8 324.4 590.6 324.1 593.6M271.1 604.6C272.6 602.8 276.3 596.7 280.3 593.6C284.3 590.5 290.0 588.4 294.9 586.3C299.8 584.2 304.6 582.6 309.5 580.8C314.4 579.0 321.7 576.3 324.1 575.4M289.4 606.4C290.0 604.3 291.6 597.0 293.1 593.6C294.6 590.2 297.6 587.5 298.5 586.3M267.5 579.0L274.8 576.3M282.0 557.0C282.8 557.2 285.4 557.5 287.0 558.0C288.6 558.5 290.6 559.8 291.3 560.1M299.0 566.3C299.7 567.4 301.7 570.7 303.0 573.0C304.3 575.3 306.1 578.9 306.7 580.1M291.3 572.4C291.8 573.2 293.2 575.7 294.0 577.5C294.8 579.3 295.6 582.2 295.9 583.2M311.0 551.0C311.7 551.8 313.8 554.0 315.0 556.0C316.2 558.0 317.5 561.8 318.0 563.0M285.0 578.0C285.7 578.5 287.8 579.8 289.0 581.0C290.2 582.2 291.5 584.3 292.0 585.0M267 586L276 587.8M267 589.5L277 590.5M268 592.5L276 593M310 541L318 543M312 545.5L320 548M336 524L347 529M335 529L346 533M337 533L347 537M339 537L347 540M299 589L305 584M301 592L308 586M303 594.5L310 589M306 596L313 590M282 598L288 592M285 601L291 595M316 566L322 572M314 572L322 578M313 578L321 583M398.3 579.5C397.6 576.1 395.5 564.6 393.8 558.9C392.1 553.1 389.7 549.0 388.0 545.0C386.3 541.0 385.8 538.2 383.5 535.0C381.2 531.8 377.6 528.3 374.4 525.8C371.2 523.3 365.6 522.0 364.1 520.1C362.6 518.2 363.5 516.3 365.2 514.4C366.9 512.5 371.0 509.3 374.4 508.7C377.8 508.1 382.4 509.5 385.8 511.0C389.2 512.5 392.2 513.8 394.9 517.8C397.6 521.8 400.5 530.2 401.8 535.0C403.1 539.8 403.3 541.3 402.9 546.4C402.5 551.5 400.3 560.3 399.5 565.8C398.7 571.3 398.5 577.2 398.3 579.5M394.9 517.8C396.4 517.4 400.9 514.9 404.0 515.5C407.1 516.1 410.9 518.0 413.2 521.3C415.5 524.5 417.1 530.8 417.7 535.0C418.3 539.2 417.7 542.4 416.6 546.4C415.5 550.4 413.4 554.1 410.9 558.9C408.4 563.6 403.3 572.2 401.8 574.9M417.7 535.0C418.9 535.6 423.1 536.9 424.6 538.4C426.1 539.9 426.9 541.8 426.9 544.1C426.9 546.4 426.5 548.9 424.6 552.1C422.7 555.3 419.1 559.3 415.5 563.5C411.9 567.7 405.0 574.9 402.9 577.2M398.3 579.5C395.1 575.3 383.6 559.9 378.9 554.4C374.1 548.9 373.2 548.7 369.8 546.4C366.4 544.1 361.8 542.0 358.4 540.7C355.0 539.4 351.7 539.7 349.2 538.4C346.7 537.1 344.6 534.4 343.5 532.7C342.4 531.0 342.0 529.6 342.4 528.1C342.8 526.6 344.1 524.5 345.8 523.5C347.5 522.5 349.6 522.2 352.7 521.8C355.8 521.4 362.2 521.4 364.1 521.3M348.1 539.5C346.4 540.5 341.0 543.1 337.8 545.2C334.6 547.3 330.8 550.2 328.7 552.1C326.6 554.0 324.9 554.7 325.3 556.6C325.7 558.5 329.9 561.4 331.0 563.5C332.1 565.6 332.9 566.9 332.1 569.2C331.3 571.5 327.7 574.4 326.4 577.2C325.1 580.1 324.1 583.3 324.1 586.3C324.1 589.3 326.0 593.5 326.4 595.0M325.3 557.2C328.3 557.7 338.4 558.5 343.5 560.1C348.6 561.7 352.5 564.4 356.1 566.9C359.7 569.4 363.7 573.6 365.2 574.9M328.7 585.2C331.2 584.8 338.6 584.4 343.5 582.9C348.4 581.4 352.7 577.7 358.4 576.0C364.1 574.3 371.1 572.0 377.8 572.6C384.5 573.2 394.9 578.4 398.3 579.5M363.0 587.5C366.4 587.1 377.8 586.5 383.5 585.2C389.2 583.9 394.9 580.5 397.2 579.5M381.2 531.5C382.4 534.4 385.4 541.5 388.1 548.7C390.8 555.9 395.7 570.5 397.2 574.9M373.2 551.0C374.1 553.5 377.4 562.0 378.9 565.8C380.4 569.6 381.8 572.5 382.4 573.8M380.1 557.8C380.8 559.0 382.7 562.5 384.0 565.0C385.3 567.5 387.4 571.3 388.1 572.6M388.1 564.6L392.6 577.2M353.8 563.5L360.7 573.8M358.4 564.6L365.2 573.8M339.0 572.6L350.4 574.3M405.2 547.5C404.6 549.4 402.9 554.3 401.8 558.9C400.7 563.5 398.9 572.2 398.3 574.9M405.5 553L409 549M404 561L408 557M385 540L381 537M387 546L391 543M417.7 557.8L409.7 565.8M363.0 506.4C367.4 506.0 382.0 503.5 389.2 504.1C396.4 504.7 401.9 508.5 406.3 509.8C410.7 511.1 414.0 511.7 415.5 512.1M385 500L393 512M389 500L398 513M394 501L402 513M399 502L407 514M404 504L412 515M409 506L416 516M414 508L421 520M419 512L425 524M332.9 601.0C332.9 602.7 333.5 608.0 333.0 611.0C332.5 614.0 329.3 615.9 329.8 618.7C330.3 621.5 334.7 624.3 336.0 627.9C337.3 631.5 335.4 637.7 337.5 640.3C339.6 642.9 344.4 642.5 348.3 643.3C352.2 644.1 356.6 645.1 360.7 644.9C364.8 644.6 369.4 641.0 373.0 641.8C376.6 642.6 379.5 648.5 382.3 649.5C385.1 650.5 387.4 649.5 390.0 648.0C392.6 646.5 395.7 642.1 397.7 640.3C399.7 638.5 401.3 637.7 402.0 637.2M333.2 610.1C336.6 609.2 346.3 606.7 353.3 604.6C360.3 602.5 367.9 600.9 375.2 597.3C382.5 593.6 393.5 585.1 397.2 582.7M329.6 600.9C333.6 600.1 345.1 598.5 353.3 596.4C361.5 594.3 371.6 590.8 378.9 588.2C386.2 585.6 394.1 582.0 397.2 580.8M342.2 634.1C344.2 632.3 349.9 626.4 354.5 623.3C359.1 620.2 367.3 616.9 369.9 615.6M371.6 611.9C372.8 613.7 377.1 619.2 378.9 622.9C380.7 626.5 381.9 632.0 382.5 633.8M363.8 587.8C364.8 588.2 367.7 589.2 370.0 590.0C372.3 590.8 376.3 592.1 377.6 592.5M366.8 604.8C368.3 604.3 372.9 602.8 376.0 602.0C379.1 601.2 383.8 600.5 385.3 600.2M345.3 611.0C346.4 610.8 349.4 610.3 352.0 610.0C354.6 609.7 359.2 609.5 360.7 609.4M350 624L354 630M352 621L357 628M355 619L360 626M358 617.5L363 624M361 617L366 623M458.8 475.0C458.2 478.7 456.2 489.6 455.0 497.0C453.8 504.4 452.4 512.8 451.4 519.5C450.4 526.2 449.7 531.1 449.0 537.0C448.3 542.9 447.3 552.1 447.0 555.1M463.3 475.0C462.8 478.7 461.0 489.6 460.0 497.0C459.0 504.4 458.1 512.8 457.3 519.5C456.6 526.2 456.0 531.1 455.5 537.0C455.0 542.9 454.6 552.1 454.4 555.1M455.8 527.0C457.3 524.0 461.1 514.1 464.8 509.1C468.5 504.2 473.9 500.8 478.1 497.3C482.3 493.9 488.0 489.9 490.0 488.4M490.0 488.4C488.8 492.3 485.6 504.0 482.6 512.1C479.6 520.2 474.9 530.6 472.2 537.3C469.5 544.0 467.2 549.7 466.2 552.2M459 522L466 515M462 526L470 512M465 530L474 508M468 534L478 505M470 539L480 504M427.7 516.6C428.2 519.1 428.6 526.5 430.6 531.4C432.6 536.3 436.3 542.2 439.5 546.2C442.7 550.2 448.2 553.6 449.9 555.1M427.7 516.6C427.2 514.1 423.7 505.4 424.7 501.7C425.7 498.0 430.6 496.0 433.6 494.3C436.6 492.6 439.8 490.6 442.5 491.3C445.2 492.0 448.7 497.5 449.9 498.7M432.1 495.8C433.6 498.8 438.3 507.2 441.0 513.6C443.7 520.0 447.2 530.9 448.4 534.4M430 505L434 510M431 510L436 516M433 515L438 522M435 520L441 527M437 525L443 532M440 530L445 536M451.4 555.1C452.9 555.4 458.1 555.1 460.3 556.6C462.5 558.1 464.8 562.0 464.8 564.0C464.8 566.0 462.3 568.0 460.3 568.5C458.3 569.0 454.1 567.2 452.9 567.0M424.7 552.2C426.2 551.5 429.9 547.2 433.6 547.7C437.3 548.2 443.5 551.9 447.0 555.1C450.5 558.3 453.2 565.0 454.4 567.0M430 549L437 561M435 549L441 562M440 551L446 563M444 553L450 565M424.7 552.2C425.6 553.5 427.4 557.7 430.0 560.0C432.6 562.3 436.2 564.8 440.0 566.0C443.8 567.2 450.8 566.8 452.9 567.0M464.8 568.5C467.0 567.8 473.7 564.8 478.1 564.0C482.6 563.2 486.1 563.0 491.5 564.0C496.9 565.0 505.2 568.5 510.8 570.0C516.4 571.5 522.6 572.5 525.0 573.0M466.2 571.5C469.2 571.8 477.3 571.8 484.0 573.0C490.7 574.2 499.5 576.9 506.3 578.9C513.1 580.9 521.9 583.8 525.0 584.8M475.1 558.1C477.1 556.6 483.0 552.2 487.0 549.2C491.0 546.2 495.4 543.8 498.9 540.3C502.4 536.8 506.1 534.3 507.8 528.4C509.5 522.5 510.1 511.1 509.3 504.7C508.6 498.3 504.3 492.3 503.3 489.8M487.0 543.3C489.0 542.8 494.7 542.3 498.9 540.3C503.1 538.3 508.7 533.6 512.2 531.4C515.7 529.2 518.5 527.7 519.7 527.0M518.2 558.1C518.5 556.6 518.6 551.2 519.7 549.2C520.8 547.2 524.1 546.7 525.0 546.2M484 552L492 543M480 556L488 547M488 556L496 549M395.0 519.5C396.2 522.0 401.2 528.2 402.4 534.4C403.6 540.6 403.1 549.2 402.4 556.6C401.7 564.0 398.7 575.2 398.0 578.9M395.0 516.6C396.5 515.9 400.9 511.4 403.9 512.1C406.9 512.8 410.3 516.5 412.8 521.0C415.3 525.5 418.2 532.6 418.7 538.8C419.2 545.0 417.5 552.6 415.8 558.1C414.1 563.6 409.6 569.3 408.4 571.5M395.0 500.2C397.5 500.9 405.4 502.7 409.8 504.7C414.2 506.7 418.0 509.6 421.7 512.1C425.4 514.6 430.4 518.3 432.1 519.5M403.9 504.7C405.4 506.4 410.3 511.3 413.0 515.0C415.7 518.7 417.8 523.3 420.2 527.0C422.6 530.7 426.4 535.6 427.7 537.3M404 538L407 546M406 548L410 556M400 560L404 565M397 568L402 574M411 534L416 530M412 542L417 538M395.0 584.8C399.9 584.8 414.8 584.3 424.7 584.8C434.6 585.3 446.5 589.3 454.4 587.8C462.3 586.3 468.0 576.9 472.2 575.9C476.4 574.9 477.9 578.9 479.6 581.9C481.3 584.9 482.4 589.9 482.6 593.7C482.9 597.6 481.4 603.1 481.1 605.0M412.8 577.4C414.8 576.5 420.6 573.7 425.0 572.0C429.4 570.3 434.6 567.8 439.5 567.0C444.4 566.2 451.9 567.0 454.4 567.0M398.0 578.0C400.0 577.5 406.3 576.0 410.0 575.0C413.7 574.0 418.3 572.5 420.0 572.0M400 587L408 605M406 587L414 605M412 587L420 605M418 587L426 605M425 588L433 605M432 589L440 605M440 589L447 603M448 589L454 600M456 588L462 598M463 585L470 595M470 580L476 590M418 579L427 572M424 579L433 572M430 580L439 573M436 580L445 573M443 581L452 574M449 582L458 574M456 583L463 577M462 581L467 576M400 571L405 582M402 566L409 580M407 565L413 578M468 568L474 575M470 590L490 604M476 592L495 603M484 589L500 597M395.0 497.3C396.7 497.1 401.7 495.6 405.4 495.8C409.1 496.0 414.6 498.7 417.3 498.7C420.0 498.7 421.0 496.3 421.7 495.8M498.9 489.8C500.4 489.6 505.3 487.9 507.8 488.4C510.3 488.9 512.7 492.1 513.7 492.8M461.8 537.3C462.5 536.8 464.5 534.6 466.2 534.4C467.9 534.1 471.2 535.6 472.2 535.8M490.0 564.0C490.2 562.0 492.0 555.7 491.5 552.2C491.0 548.8 487.8 544.8 487.0 543.3M551.4 529.4C552.5 528.6 554.8 525.7 557.7 524.6C560.6 523.5 564.9 523.0 568.9 523.0C572.9 523.0 578.2 523.3 581.7 524.6C585.2 525.9 587.3 530.2 589.7 531.0C592.1 531.8 594.0 528.6 596.1 529.4C598.2 530.2 599.6 534.5 602.5 535.8C605.4 537.1 610.5 536.1 613.7 537.4C616.9 538.7 620.1 541.7 621.7 543.8C623.3 545.9 622.0 549.7 623.3 550.2C624.6 550.7 627.3 546.7 629.7 547.0C632.1 547.3 635.6 549.7 637.7 551.8C639.8 553.9 641.2 557.7 642.5 559.8C643.8 561.9 643.8 562.2 645.7 564.6C647.6 567.0 651.6 571.5 653.7 574.1C655.8 576.8 657.5 577.0 658.5 580.5C659.5 584.0 660.0 590.9 660.0 594.9C660.0 598.9 659.5 601.0 658.5 604.5C657.5 608.0 655.8 612.2 653.7 615.7C651.6 619.2 648.6 622.4 645.7 625.3C642.8 628.2 639.3 632.5 636.1 633.3C632.9 634.1 629.7 631.4 626.5 630.1C623.3 628.8 619.8 626.6 616.9 625.3C614.0 624.0 611.8 624.0 608.9 622.1C606.0 620.2 601.7 617.0 599.3 614.1C596.9 611.2 595.3 608.2 594.5 604.5C593.7 600.8 593.7 595.2 594.5 591.7C595.3 588.2 598.5 585.0 599.3 583.7M599.3 583.7C602.2 582.1 611.3 576.1 616.9 574.1C622.5 572.1 628.4 572.0 632.9 571.7C637.4 571.4 642.2 572.4 644.1 572.5M602.5 590.1C604.9 589.8 612.9 588.2 616.9 588.5C620.9 588.8 624.9 591.2 626.5 591.7M604.1 591.7C604.6 592.4 605.9 594.7 607.0 596.0C608.1 597.3 609.9 599.1 610.5 599.7M608.9 601.3C609.4 601.8 610.9 603.4 612.0 604.5C613.1 605.6 614.8 607.2 615.3 607.7M623.3 607.7C623.9 608.8 625.9 611.9 627.0 614.0C628.1 616.1 629.2 619.4 629.7 620.5M631.3 594.9C632.2 596.8 635.1 602.3 637.0 606.0C638.9 609.7 641.6 615.4 642.5 617.3M642.5 596.5C643.2 596.9 645.2 598.2 646.5 599.0C647.8 599.8 649.8 600.9 650.5 601.3M623.3 575.7C624.9 575.5 629.8 574.8 633.0 574.5C636.2 574.2 640.9 574.2 642.5 574.1M628.1 579.7C629.2 579.6 632.4 579.1 634.5 579.0C636.6 578.9 639.8 578.9 640.9 578.9M624 566L630 562M626 568.5L633 564M567.3 524.6C567.3 525.2 567.3 526.4 567.3 528.0C567.3 529.6 567.3 533.2 567.3 534.2M592.9 531.0C592.1 532.6 589.4 537.7 588.1 540.6C586.8 543.5 585.4 547.3 584.9 548.6M600.9 539.0C600.5 539.5 599.3 540.9 598.5 542.0C597.7 543.1 596.5 544.8 596.1 545.4M553 531L558 536M555 529L561 535M558 528L564 534M532.2 537.4C533.0 536.6 534.1 533.7 537.0 532.6C539.9 531.5 546.1 530.5 549.8 531.0C553.5 531.5 556.6 533.4 559.3 535.8C561.9 538.2 564.6 541.9 565.7 545.4C566.8 548.9 566.5 554.2 565.7 556.6C564.9 559.0 561.7 559.3 560.9 559.8M532.2 537.4C532.7 537.9 533.3 539.8 535.4 540.6C537.5 541.4 542.6 541.3 545.0 542.2C547.4 543.1 547.9 545.4 549.8 546.2C551.7 547.0 554.9 546.6 556.2 547.0C557.5 547.4 557.5 548.3 557.7 548.6M517.8 558.2C517.8 557.1 516.5 553.7 517.8 551.8C519.1 549.9 522.6 547.8 525.8 547.0C529.0 546.2 533.8 545.9 537.0 547.0C540.2 548.1 544.7 551.5 545.0 553.4C545.3 555.3 541.3 557.7 538.6 558.2C535.9 558.7 531.9 556.5 529.0 556.6C526.1 556.7 522.3 558.6 521.0 559.0M545.0 556.6C545.3 558.5 545.3 564.8 546.6 567.7C547.9 570.6 550.6 573.0 553.0 574.1C555.4 575.2 558.8 575.2 560.9 574.1C563.0 573.0 565.4 569.8 565.7 567.7C566.0 565.6 564.4 563.0 562.5 561.4C560.6 559.8 555.9 558.7 554.6 558.2M567.3 567.7C569.4 566.6 575.7 563.1 580.0 561.0C584.3 558.9 590.8 556.0 592.9 555.0M567.3 567.7C569.8 567.9 577.2 568.5 582.0 569.0C586.8 569.5 593.8 570.7 596.1 571.0M567.3 567.7C567.8 566.2 568.9 561.6 570.0 559.0C571.1 556.4 573.1 553.0 573.7 551.8M567.3 567.7C569.9 568.6 577.9 571.1 583.0 573.0C588.1 574.9 595.2 578.0 597.7 579.0M568 566L576 553M569 567L584 556M570 568L588 560M569 569L590 565M570 570L592 574M569 571L590 577M565.7 572.5C567.6 572.2 573.2 570.5 576.9 571.0C580.6 571.5 584.6 573.6 588.1 575.7C591.6 577.8 596.1 582.4 597.7 583.7M505.0 569.3C507.7 569.6 515.7 571.5 521.0 571.0C526.3 570.5 533.0 568.9 537.0 566.2C541.0 563.5 543.7 556.9 545.0 555.0M505.0 578.9C510.3 580.8 526.4 586.4 537.0 590.1C547.6 593.8 559.3 598.6 568.9 601.3C578.5 604.0 590.2 605.3 594.5 606.1M517.8 578.9C523.1 581.0 540.2 589.8 549.8 591.7C559.4 593.6 568.1 590.9 575.3 590.1C582.5 589.3 590.0 587.4 592.9 586.9M565.7 577.3C566.4 578.2 568.4 581.1 570.0 583.0C571.6 584.9 574.4 587.6 575.3 588.5M534 582L540 591M539 583L545 593M544 585L550 595M549 587L555 597M554 589L560 598M559 590L565 599M564 591L569 600M578 592L582 600M583 592L587 601M588 593L592 603M505.0 539.0C506.6 537.7 511.1 532.9 514.6 531.0C518.1 529.1 523.9 528.3 525.8 527.8M585 588L590 583M588 590L593 585M380.0 649.1C380.8 649.3 383.1 650.6 384.6 650.2C386.1 649.8 387.0 647.8 389.1 646.8C391.2 645.8 395.8 645.8 397.1 644.5C398.4 643.2 396.5 639.3 397.1 638.8C397.7 638.3 397.9 641.1 400.6 641.6C403.3 642.1 410.5 642.2 413.1 641.6C415.8 641.0 415.4 637.8 416.5 637.7C417.6 637.6 418.1 640.6 420.0 641.1C421.9 641.6 425.1 640.7 428.0 640.5C430.9 640.3 435.2 640.6 437.1 639.9C439.0 639.2 438.8 638.2 439.4 636.5C440.0 634.8 439.0 629.9 440.5 629.7C442.0 629.5 446.4 635.0 448.5 635.4C450.6 635.8 451.6 632.8 453.1 631.9C454.6 631.0 456.2 630.8 457.7 629.7C459.2 628.6 461.1 628.0 462.2 625.1C463.3 622.2 463.9 614.0 464.5 612.5C465.1 611.0 464.3 615.1 465.6 616.0C466.9 616.9 470.0 619.0 472.5 617.7C475.0 616.4 479.0 611.9 480.5 608.0C482.0 604.1 481.2 597.9 481.6 594.3C482.0 590.7 483.0 588.6 482.8 586.3C482.6 584.0 481.8 582.1 480.5 580.6C479.2 579.1 476.7 578.8 474.8 577.1C472.9 575.4 470.1 571.4 469.1 570.3M389.1 605.7C389.1 606.8 388.3 609.5 389.1 612.5C389.9 615.5 392.9 622.1 393.7 624.0M391.4 616.0C392.2 616.7 394.5 618.7 396.0 620.0C397.5 621.3 399.8 623.3 400.6 624.0M396.0 601.1C397.1 603.0 400.1 608.7 402.8 612.5C405.5 616.3 410.5 622.1 412.0 624.0M398.3 585.1C398.0 586.2 396.9 589.7 396.5 592.0C396.1 594.3 396.1 597.7 396.0 598.8M400 590L410 610M403 589L414 611M406 588L417 613M410 590L420 614M414 592L422 612M418 594L424 608M423.4 598.8C424.7 599.9 428.9 602.7 431.4 605.7C433.9 608.8 436.5 613.3 438.2 617.1C439.9 620.9 441.1 626.6 441.7 628.5M444.0 612.5C444.6 614.4 446.6 620.4 447.4 624.0C448.1 627.6 448.3 632.5 448.5 634.2M407.4 586.3C410.4 588.0 420.8 593.3 425.7 596.5C430.6 599.7 433.9 604.2 437.1 605.7C440.3 607.2 443.8 605.7 445.1 605.7M408.5 585.1C413.3 585.9 428.5 589.1 437.1 589.7C445.7 590.3 453.0 588.1 459.9 588.5C466.8 588.9 475.1 591.4 478.2 592.0M399.4 585.1C403.8 585.0 417.5 584.4 425.7 584.6C433.9 584.8 439.9 585.3 448.5 586.3C457.1 587.3 472.3 590.0 477.1 590.8M409.7 579.4C413.3 578.3 424.0 574.3 431.4 572.6C438.8 570.9 448.3 569.7 454.2 569.1C460.1 568.5 464.7 569.1 466.8 569.1M428 610L436 628M431 615L438 632M426 616L433 632M426 621L431 636M442 612L446 624M448 614L452 628M452 618L456 626M445 577L452 583M450 577L457 584M455 578L462 585M460 578L467 586M464 580L471 588M468 583L474 591M472 586L478 594M452 590L460 606M457 590L465 605M462 591L469 605M467 592L473 604M472 594L477 604M380.0 609.1C381.5 608.1 386.4 605.9 389.1 603.4C391.8 600.9 394.5 597.3 396.0 594.3C397.5 591.2 397.9 586.6 398.3 585.1M380.0 589.7C381.9 588.9 388.3 586.8 391.4 585.1C394.4 583.4 397.1 580.4 398.3 579.4M436.0 374.2C437.2 373.3 440.3 370.4 443.4 368.7C446.4 367.0 450.8 364.7 454.3 364.1C457.8 363.5 461.5 364.1 464.4 365.0C467.3 365.9 469.4 367.5 471.7 369.6C474.0 371.7 476.7 375.2 478.1 377.8C479.5 380.4 479.8 383.0 479.9 385.1C480.0 387.2 479.1 389.7 479.0 390.6M441.5 376.9C442.6 376.1 445.1 373.5 447.9 372.4C450.6 371.3 454.5 370.0 458.0 370.1C461.5 370.2 465.5 371.6 468.9 373.3C472.2 375.1 476.6 379.4 478.1 380.6M446.1 375.1L448.8 379.7M451.6 371.4L452.5 378.7M457.1 370.5L457.1 379.7M463.4 372.4L460.7 380.6M468.9 375.1L464.4 381.5M472.6 379.7L468.0 384.2M443.0 384.0C443.3 383.1 444.9 381.7 446.0 381.5C447.1 381.3 448.5 383.2 449.5 383.0C450.5 382.8 450.9 380.7 452.0 380.5C453.1 380.3 455.0 381.2 456.0 382.0C457.0 382.8 457.2 384.8 458.0 385.0C458.8 385.2 459.8 383.2 461.0 383.0C462.2 382.8 464.0 383.3 465.0 384.0C466.0 384.7 466.2 386.2 467.0 387.0C467.8 387.8 469.6 388.0 470.0 389.0C470.4 390.0 470.0 391.8 469.5 393.0C469.0 394.2 468.1 395.3 467.0 396.0C465.9 396.7 464.2 397.1 463.0 397.0C461.8 396.9 461.0 395.3 460.0 395.5C459.0 395.7 458.2 397.3 457.0 398.0C455.8 398.7 454.3 399.7 453.0 399.7C451.7 399.7 450.0 398.8 449.0 398.0C448.0 397.2 447.9 395.7 447.0 395.0C446.1 394.3 444.3 394.8 443.5 394.0C442.7 393.2 442.3 391.2 442.4 390.0C442.5 388.8 443.9 388.0 444.0 387.0C444.1 386.0 442.7 384.9 443.0 384.0M447.0 389.0C447.5 389.3 449.0 391.0 450.0 391.0C451.0 391.0 452.0 388.8 453.0 389.0C454.0 389.2 455.0 391.8 456.0 392.0C457.0 392.2 458.5 390.3 459.0 390.0M450.0 395.0C450.5 394.7 452.0 393.0 453.0 393.0C454.0 393.0 455.5 394.7 456.0 395.0M462 386.5a2 2 0 1 1 0.1 0M448 385a1.6 1.6 0 1 1 0.1 0M436.0 375.1C434.3 375.7 429.2 377.2 426.0 378.7C422.8 380.2 418.9 382.4 416.9 384.2C414.9 386.0 415.0 386.9 414.1 389.7C413.2 392.4 411.8 397.0 411.4 400.7C410.9 404.4 410.6 408.6 411.4 411.6C412.2 414.6 414.0 416.5 416.0 418.9C418.0 421.3 421.2 424.8 423.3 426.2C425.4 427.6 426.6 427.7 428.7 427.1C430.8 426.5 434.8 423.4 436.0 422.6M415.0 389.7C417.1 389.2 423.4 387.8 427.8 387.0C432.2 386.2 439.2 385.4 441.5 385.1M420.5 404.3C421.9 402.5 425.2 396.1 428.7 393.4C432.2 390.7 439.4 388.8 441.5 387.9M427.8 402.5C428.8 401.4 431.7 397.8 434.0 396.0C436.3 394.2 440.2 392.2 441.5 391.5M431.5 402.5C432.2 401.6 434.2 398.5 436.0 397.0C437.8 395.5 441.3 394.0 442.4 393.4M469.8 391.5C471.6 392.3 477.9 394.1 480.8 396.1C483.7 398.1 485.2 400.8 487.2 403.4C489.2 406.0 493.0 409.0 492.7 411.6C492.4 414.2 487.8 417.4 485.4 418.9C483.0 420.4 479.3 420.5 478.1 420.8M470.8 393.4C471.7 394.8 474.1 398.3 476.2 401.6C478.3 404.9 482.3 411.4 483.5 413.4M472.6 392.4C473.7 393.5 476.9 396.7 479.0 399.0C481.1 401.3 484.3 404.9 485.4 406.1M475.3 392.4C476.2 393.0 479.0 394.6 481.0 396.0C483.0 397.4 486.2 399.9 487.2 400.7M480.8 377.8C481.2 376.0 482.1 369.6 483.5 366.9C484.9 364.2 486.9 362.8 489.0 361.4C491.1 360.0 494.2 359.3 496.3 358.7C498.4 358.1 500.9 357.9 501.8 357.7M485.4 366.9C485.2 369.5 483.3 375.9 484.5 382.4C485.7 388.9 489.8 400.6 492.7 406.1C495.6 411.6 500.3 413.8 501.8 415.3M489.0 366.0C489.1 368.7 488.3 376.3 489.5 382.4C490.7 388.5 493.7 398.2 496.3 402.5C498.9 406.8 503.6 407.1 505.0 408.0M492.7 370.5C493.0 372.8 493.1 379.5 494.5 384.2C495.9 388.9 499.8 396.4 500.9 398.8M480.8 377.8C481.2 380.4 481.8 388.7 483.5 393.4C485.2 398.1 487.8 402.5 490.8 406.1C493.9 409.8 500.0 413.8 501.8 415.3M496.5 363.0C496.8 365.5 496.9 373.2 498.0 378.0C499.1 382.8 502.2 389.7 503.0 392.0M414.1 355.0C414.2 355.8 414.4 358.0 414.5 360.0C414.6 362.0 414.1 366.7 415.0 366.9C415.9 367.1 418.3 363.0 420.0 361.0C421.7 359.0 424.2 356.0 425.1 355.0M508.0 449.0C506.2 453.3 500.7 466.0 497.0 475.0C493.3 484.0 489.3 493.8 486.0 503.0C482.7 512.2 479.8 521.3 477.0 530.0C474.2 538.7 470.4 550.9 469.1 555.1M512.5 453.0C510.8 457.2 505.6 469.2 502.0 478.0C498.4 486.8 494.3 497.0 491.0 506.0C487.7 515.0 484.9 523.8 482.0 532.0C479.1 540.2 475.2 551.2 473.9 555.1M392.4 497.5C393.7 496.4 398.3 492.5 400.4 491.2C402.5 489.9 402.3 489.1 405.2 489.6C408.1 490.1 415.1 492.5 418.0 494.3C420.9 496.1 421.1 500.2 422.7 500.7C424.3 501.2 425.1 498.8 427.5 497.5C429.9 496.2 434.2 493.2 437.1 492.7C440.0 492.2 443.0 493.5 445.1 494.3C447.2 495.1 449.1 497.0 449.9 497.5M370.0 492.7C372.7 494.0 379.3 498.3 386.0 500.7C392.7 503.1 403.1 504.7 410.0 507.1C416.9 509.5 424.6 513.8 427.5 515.1M370.0 508.7C372.7 508.4 380.7 506.6 386.0 507.1C391.3 507.6 396.7 509.2 402.0 511.9C407.3 514.6 413.8 519.6 418.0 523.1C422.2 526.6 425.9 531.1 427.5 532.7M412 508L420 516M416 508L424 517M420 509L428 519M424 511L431 521M428 513L434 524M432 516L438 527M436 520L441 530M459.5 478.4C461.1 478.1 465.9 476.5 469.1 476.8C472.3 477.1 476.2 478.5 478.7 480.0C481.2 481.5 483.8 484.0 484.0 486.0C484.2 488.0 481.7 491.3 480.0 492.0C478.3 492.7 475.0 490.3 474.0 490.0M534.8 399.6C536.1 400.1 539.5 401.5 542.7 402.8C545.9 404.1 549.4 407.1 553.9 407.6C558.4 408.1 565.6 407.3 569.9 406.0C574.2 404.7 576.6 401.7 579.5 399.6C582.4 397.5 586.2 394.3 587.5 393.2M518.8 399.6C520.4 399.9 525.5 401.7 528.4 401.2C531.3 400.7 534.5 398.3 536.4 396.4C538.3 394.5 539.1 391.1 539.6 390.0M490.0 396.4C491.6 398.8 497.5 407.6 499.6 410.8C501.7 414.0 500.9 416.4 502.8 415.6C504.7 414.8 508.4 410.3 510.8 406.0C513.2 401.7 516.1 392.7 517.2 390.0M555.0 394.0C555.8 395.0 558.8 400.3 560.0 400.0C561.2 399.7 560.8 392.2 562.0 392.0C563.2 391.8 569.3 399.2 567.0 399.0C564.7 398.8 550.3 391.2 548.0 391.0C545.7 390.8 552.2 396.8 553.0 398.0" fill="none" stroke="#808080" stroke-width="0.4" vector-effect="non-scaling-stroke"/></g></svg>
<div class="abs" style="left:1258px;top:780px;width:260px;height:1px;background:#bcbcbe"></div>
<div class="abs" style="left:1268px;top:786px;width:53px;height:36px;background:#fff;border:1px solid #555;border-radius:2px"></div>
<div class="pt" style="left:1341px;top:799px;font-size:10px;letter-spacing:-0.2px">Blank Canvas</div>
<svg class="abs" style="left:1472px;top:796px" width="18" height="16" fill="none" stroke="#4a545c" stroke-width="1.2">
  <path d="M2 8C5 3.5 12 3.5 15.5 8C12 12.5 5 12.5 2 8Z"/>
  <circle cx="8.8" cy="7.8" r="2.6"/>
  <path d="M3.5 2.5L15 14" stroke-width="1.3"/>
</svg>
<div class="abs" style="left:1258px;top:829px;width:260px;height:45px;background:#e3e3e5"></div>
<svg class="abs" style="left:1258px;top:829px" width="260" height="45" fill="none" stroke="#c2c2c4" stroke-width="1.1">
  <rect x="14.5" y="6.5" width="10" height="10" rx="1"/>
  <circle cx="24.5" cy="16.5" r="6"/>
  <path d="M18.6 16.6H24.4V10.8"/>
  <path d="M60 6.5H70V11.5A5.5 5.5 0 1 1 64.5 16.5H60Z" stroke-linejoin="round"/>
  <path d="M113.6 10L120.7 19.8C121.9 21.5 124.5 21.7 125.8 20C127 18.5 126.6 16.8 125.6 15.4L118.3 5.9C117.3 4.6 115.5 4.5 114.4 5.6C113.5 6.5 113.6 7.8 114.3 8.8L121 17.8C121.5 18.5 122.4 18.5 122.9 17.9C123.3 17.4 123.2 16.8 122.8 16.3L116.9 8.5"/>
  <path d="M172.5 5.5V15M169.5 12L172.5 15L175.5 12"/>
  <path d="M164.5 15L172.5 11L181 15L172.5 19Z" stroke-linejoin="round"/>
  <path d="M164.5 18.5L172.5 22.5L181 18.5" stroke-linejoin="round"/>
  <g stroke="#4a545c">
    <rect x="222" y="7" width="16.4" height="15.5" stroke-width="1.2"/>
    <circle cx="230.2" cy="14.8" r="4.8" stroke-dasharray="2.2 1.6"/>
  </g>
</svg>
<div class="pt" style="left:1270px;top:857px;font-size:10px;color:#c0c0c2">Slice</div>
<div class="pt" style="left:1316px;top:857px;font-size:10px;color:#c0c0c2">Weld</div>
<div class="pt" style="left:1362px;top:857px;font-size:10px;color:#c0c0c2">Attach</div>
<div class="pt" style="left:1415px;top:857px;font-size:10px;color:#c0c0c2">Flatten</div>
<div class="pt" style="left:1471px;top:857px;font-size:10px">Contour</div>
<!-- zoom control -->
<div class="abs" style="left:99px;top:812px;width:89px;height:38px;background:rgba(225,225,228,0.35);border-radius:5px"></div>
<svg class="abs" style="left:99px;top:812px" width="89" height="38" fill="none" stroke="#d6d6d8" stroke-width="1">
  <circle cx="15" cy="20.5" r="9.5"/>
  <path d="M10 20.5H20"/>
  <circle cx="74" cy="20.5" r="9.5"/>
  <path d="M69 20.5H79M74 15.5V25.5"/>
</svg>
<div class="pt" style="left:129px;top:827px;font-size:12px;color:#d4d4d6;letter-spacing:-0.4px">100%</div>

</body></html>
